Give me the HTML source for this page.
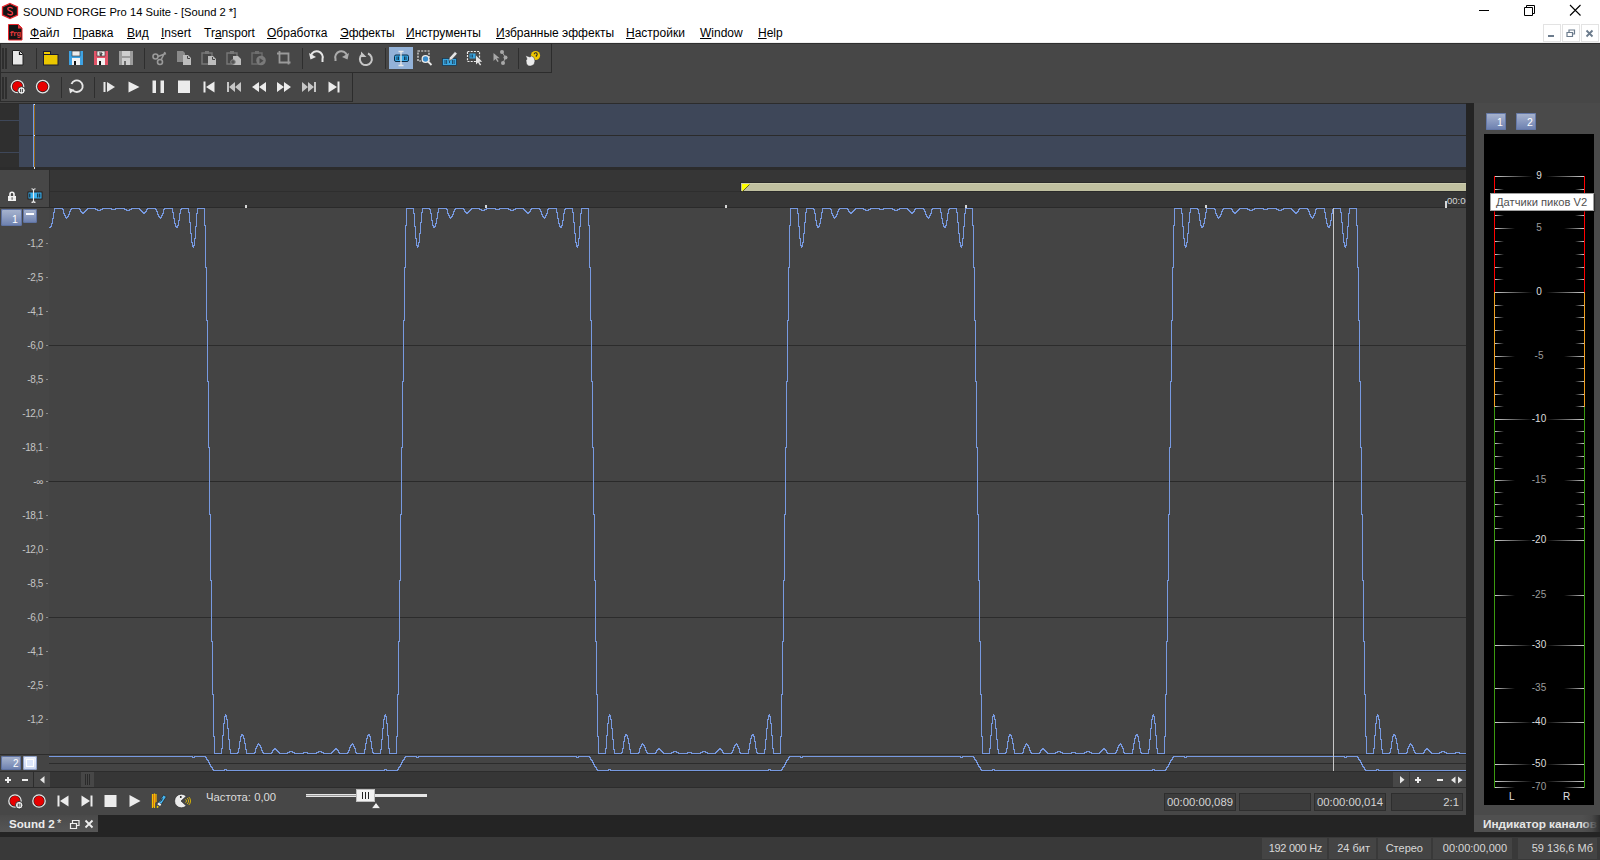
<!DOCTYPE html>
<html><head><meta charset="utf-8">
<style>
*{margin:0;padding:0;box-sizing:border-box}
html,body{width:1600px;height:860px;overflow:hidden;background:#474747;font-family:"Liberation Sans",sans-serif;font-size:12px}
.a{position:absolute}
.t{position:absolute;white-space:pre;line-height:1}
.mi{position:absolute;top:27px;color:#000;font-size:12px;white-space:pre;line-height:1}
.mi u{text-decoration:underline;text-decoration-thickness:1px;text-underline-offset:1px}
.tb{position:absolute;border:1px solid #2c2c2c}
.sep{position:absolute;width:1px;background:#2f2f2f}
.db{position:absolute;left:0;width:43px;text-align:right;font-size:10px;letter-spacing:-0.4px;color:#c4c4c4;line-height:1;white-space:pre}
.dbt{position:absolute;left:46px;width:2px;height:1px;background:#8a8a8a}
.cb{position:absolute;border-radius:2px;background:linear-gradient(#aab6cf,#8c9cc0 50%,#6a7eae);box-shadow:inset 0 0 0 1px #5f73a3}
.mt{position:absolute;font-size:10px;color:#d8d8d8;line-height:1;white-space:pre;text-align:center;width:30px}
.fld{position:absolute;top:793px;height:18px;background:#3c3c3c;border:1px solid #2e2e2e;color:#d4d4d4;font-size:11.3px;line-height:16px;white-space:pre}
.st{position:absolute;top:838px;height:21px;background:#444;color:#d8d8d8;font-size:11px;line-height:20px;white-space:pre;text-align:right}
</style></head><body>
<!-- ============ TITLE BAR ============ -->
<div class="a" style="left:0;top:0;width:1600px;height:43px;background:#fff"></div>
<div class="a" style="left:0;top:42px;width:1600px;height:1px;background:#efefef"></div>
<div class="a" style="left:0;top:43px;width:1600px;height:1px;background:#2f2f2f"></div>
<svg class="a" style="left:1px;top:2px" width="18" height="18" viewBox="0 0 18 18">
<polygon points="9,1.5 16.5,5 16.5,13 9,16.5 1.5,13 1.5,5" fill="#141414" stroke="#e8262c" stroke-width="1.3"/>
<path d="M11.6 6.6c-.5-.8-1.4-1.2-2.5-1.2-1.3 0-2.3.7-2.3 1.7 0 2.2 4.8 1.3 4.8 3.8 0 1.1-1 1.9-2.5 1.9-1.1 0-2-.4-2.6-1.2" fill="none" stroke="#f03a40" stroke-width="1.4"/>
</svg>
<div class="t" style="left:23px;top:7px;font-size:11.2px;color:#000">SOUND FORGE Pro 14 Suite - [Sound 2 *]</div>
<div class="a" style="left:1479px;top:10px;width:10px;height:1px;background:#000"></div>
<svg class="a" style="left:1523px;top:4px" width="13" height="13"><path d="M1.5 3.5h8v8h-8z M3.5 3.5v-2h8v8h-2" fill="none" stroke="#000" stroke-width="1"/></svg>
<svg class="a" style="left:1569px;top:4px" width="13" height="13"><path d="M1 1L11.5 11.5M11.5 1L1 11.5" stroke="#000" stroke-width="1.1"/></svg>

<!-- ============ MENU BAR ============ -->
<svg class="a" style="left:8px;top:24px" width="15" height="17" viewBox="0 0 15 17">
<path d="M0.5 0.5h10l3.5 3.5v12h-13.5z" fill="#141414" stroke="#e8262c" stroke-width="1"/>
<path d="M10 0.5l4 4h-4z" fill="#e8363c"/>
<text x="1.5" y="12" font-family="Liberation Mono" font-weight="bold" font-size="7.4" fill="#e8383c" letter-spacing="-0.9">frg</text>
</svg>
<div class="mi" style="left:30px"><u>Ф</u>айл</div>
<div class="mi" style="left:73px"><u>П</u>равка</div>
<div class="mi" style="left:127px"><u>В</u>ид</div>
<div class="mi" style="left:161px"><u>I</u>nsert</div>
<div class="mi" style="left:204px">Tr<u>a</u>nsport</div>
<div class="mi" style="left:267px"><u>О</u>бработка</div>
<div class="mi" style="left:340px"><u>Э</u>ффекты</div>
<div class="mi" style="left:406px"><u>И</u>нструменты</div>
<div class="mi" style="left:496px"><u>И</u>збранные эффекты</div>
<div class="mi" style="left:626px"><u>Н</u>астройки</div>
<div class="mi" style="left:700px"><u>W</u>indow</div>
<div class="mi" style="left:758px"><u>H</u>elp</div>
<div class="a" style="left:1543px;top:24px;width:18px;height:18px;border:1px solid #e3e3e3"></div>
<div class="a" style="left:1562px;top:24px;width:18px;height:18px;border:1px solid #e3e3e3"></div>
<div class="a" style="left:1581px;top:24px;width:18px;height:18px;border:1px solid #e3e3e3"></div>
<div class="a" style="left:1548px;top:35px;width:6px;height:2px;background:#6b7b8c"></div>
<svg class="a" style="left:1566px;top:28px" width="10" height="10"><path d="M1 4.5h5.5v4h-5.5z M3 4.5v-2.5h5.5v4h-2" fill="none" stroke="#6b7b8c" stroke-width="1.2"/></svg>
<svg class="a" style="left:1585px;top:29px" width="10" height="10"><path d="M1.5 1.5L7.5 7.5M7.5 1.5L1.5 7.5" stroke="#6b7b8c" stroke-width="1.8"/></svg>

<!-- ============ TOOLBARS ============ -->
<div class="tb" style="left:0;top:43px;width:552px;height:30px"></div>
<div class="tb" style="left:0;top:72px;width:353px;height:30px"></div>
<svg class="a" style="left:0;top:0" width="560" height="102" viewBox="0 0 560 102">
<!-- grips -->
<rect x="2" y="48" width="2" height="21" fill="#2e2e2e"/><rect x="5" y="48" width="2" height="21" fill="#2e2e2e"/>
<rect x="2" y="77" width="2" height="22" fill="#2e2e2e"/><rect x="5" y="77" width="2" height="22" fill="#2e2e2e"/>
<!-- separators tb1 -->
<rect x="36" y="48" width="1" height="21" fill="#2e2e2e"/>
<rect x="144" y="48" width="1" height="21" fill="#2e2e2e"/>
<rect x="302" y="48" width="1" height="21" fill="#2e2e2e"/>
<rect x="385" y="48" width="1" height="21" fill="#2e2e2e"/>
<rect x="518" y="48" width="1" height="21" fill="#2e2e2e"/>
<!-- new -->
<path d="M12.5 50.5h7l3.5 3.5v11h-10.5z" fill="#e9e9e9" stroke="#222" stroke-width="1"/>
<path d="M19.5 51.5v3h3" fill="none" stroke="#111" stroke-width="1.2"/>
<!-- open -->
<rect x="43.5" y="51.5" width="7" height="3" fill="#f0cc00" stroke="#1c1c30" stroke-width="1"/>
<rect x="43.5" y="54.5" width="14.5" height="10.5" fill="#ebc700" stroke="#1c1c30" stroke-width="1"/>
<!-- save blue -->
<rect x="69" y="51" width="14" height="14" fill="#3ea2e2"/>
<rect x="72" y="51" width="8" height="5" fill="#ececec" stroke="#2a2a2a" stroke-width="0.6"/>
<rect x="72" y="58" width="8" height="7" fill="#f2f2f2"/><rect x="74" y="61" width="2" height="4" fill="#151515"/>
<!-- save as red -->
<rect x="94" y="51" width="14" height="14" fill="#e25468"/>
<rect x="97" y="51" width="8" height="5" fill="#ececec" stroke="#2a2a2a" stroke-width="0.6"/>
<path d="M99 53h3v1.2h-2v1h2" fill="none" stroke="#222" stroke-width="0.9"/>
<rect x="97" y="58" width="8" height="7" fill="#f2f2f2"/><rect x="99" y="61" width="2" height="4" fill="#151515"/>
<!-- save gray -->
<rect x="119" y="51" width="14" height="14" fill="#9c9c9c"/>
<rect x="122" y="51" width="8" height="5" fill="#cfcfcf"/>
<rect x="122" y="58" width="8" height="7" fill="#cfcfcf"/><rect x="124" y="61" width="2" height="4" fill="#6a6a6a"/>
<!-- scissors -->
<g fill="none" stroke="#9a9a9a" stroke-width="1.6"><circle cx="155.5" cy="56.5" r="2.5"/><circle cx="160" cy="62" r="2.5"/><path d="M158 56.5l8-3M161 60l4-8"/></g>
<!-- copy -->
<path d="M177 51h6l2 2v9h-8z" fill="#8a8a8a"/><path d="M183 55h5l3 3v7h-8z" fill="#bdbdbd"/><path d="M187.5 56v2.5h2.5" fill="none" stroke="#444" stroke-width="1"/>
<!-- paste -->
<path d="M202 53h10v11h-10z" fill="none" stroke="#777" stroke-width="1.4"/><rect x="205" y="51" width="4" height="3" fill="#777"/><path d="M208 56h5l3 3v6h-8z" fill="#bdbdbd"/><path d="M212.5 57v2.5h2.5" fill="none" stroke="#444" stroke-width="1"/>
<!-- paste mix -->
<path d="M227 53h10v11h-10z" fill="none" stroke="#777" stroke-width="1.4"/><rect x="230" y="51" width="4" height="3" fill="#777"/><path d="M233 56h5l3 3v6h-8z" fill="#bdbdbd"/><circle cx="233" cy="62" r="2.3" fill="#555" stroke="#888" stroke-width="1"/>
<!-- paste play -->
<path d="M252 53h10v11h-10z" fill="none" stroke="#6e6e6e" stroke-width="1.4"/><rect x="255" y="51" width="4" height="3" fill="#6e6e6e"/><circle cx="261" cy="60.5" r="4.8" fill="#7a7a7a"/><path d="M259.5 58v5.5l4-2.75z" fill="#4a4a4a"/>
<!-- crop -->
<path d="M279.5 51v11.5h11M277 53.5h11.5v11" fill="none" stroke="#9a9a9a" stroke-width="1.8"/>
<!-- undo -->
<path d="M311 55.5a6 6 0 0 1 11.5 3.5v3" fill="none" stroke="#e6e6e6" stroke-width="2"/><path d="M309 53l1.5 6.5 5.5-2.5z" fill="#e6e6e6"/>
<!-- redo -->
<path d="M347 55.5a6 6 0 0 0 -11.5 3.5v2" fill="none" stroke="#ababab" stroke-width="2"/><path d="M349 53l-1.5 6.5 -5.5-2.5z" fill="#ababab"/>
<!-- repeat -->
<path d="M362 54.5a6 6 0 1 0 6 -1" fill="none" stroke="#c6c6c6" stroke-width="2"/><path d="M361 51.5v5.5h5.5z" fill="#c6c6c6"/>
<!-- selected edit tool -->
<rect x="389" y="47" width="24" height="22" fill="#93b2d8"/>
<rect x="394.5" y="55" width="14" height="6.5" rx="1.5" fill="#39a8e6" stroke="#0f2c44" stroke-width="1"/>
<path d="M397 56.5v3.5M398.5 56.5v3.5M404.5 56.5v3.5M406 56.5v3.5" stroke="#0f2c44" stroke-width="0.9"/>
<path d="M398.5 51.5h5M401 51.5v14M398.5 65.5h5" stroke="#e8e8e8" stroke-width="1.3"/>
<!-- magnify tool -->
<rect x="418" y="51" width="11" height="10" fill="none" stroke="#ececec" stroke-width="1.2" stroke-dasharray="2 1.2"/>
<circle cx="425.5" cy="59" r="3.3" fill="#3a8ecf" stroke="#ececec" stroke-width="1.3"/><path d="M428 61.5l3.5 3.5" stroke="#ececec" stroke-width="1.8"/>
<!-- pencil tool -->
<rect x="442.5" y="58.5" width="14" height="7" fill="#3aa6e0" stroke="#1a3850" stroke-width="0.8"/><path d="M445 60v4M446.6 60v4M452.5 60v4M454.1 60v4M449.5 61v2" stroke="#1a3850" stroke-width="0.8"/>
<path d="M449.5 57.5l5.5-6 2.3 2.2-5.5 6-3 .8z" fill="#e4e4e4" stroke="#2a2a2a" stroke-width="0.5"/>
<!-- event tool -->
<rect x="467.5" y="51.5" width="12" height="10" fill="none" stroke="#eee" stroke-width="1.2" stroke-dasharray="2 1.2"/>
<rect x="469.5" y="53.5" width="6" height="5" fill="#3aa6e0"/><path d="M471 54.5v3M472.5 54.5v3" stroke="#1a3850" stroke-width="0.8"/>
<path d="M476 55.5v9l2-2 2 3 1.2-.8-2-3h3z" fill="#e6e6e6"/>
<!-- envelope tool -->
<path d="M493.5 53v8l2-2 2 3 1.2-.8-2-3h3z" fill="#a8a8a8"/><circle cx="502" cy="52" r="2" fill="#a8a8a8"/><circle cx="505.5" cy="57.5" r="2" fill="#a8a8a8"/><circle cx="503" cy="63" r="2" fill="#a8a8a8"/><path d="M502 52l3.5 5.5-2.5 5.5" fill="none" stroke="#a8a8a8" stroke-width="1"/>
<!-- help -->
<circle cx="535.5" cy="55.5" r="4.6" fill="#f0c800"/><path d="M534.2 54.3a1.5 1.5 0 1 1 2.1 1.3v1.2" fill="none" stroke="#2a2a2a" stroke-width="1.1"/>
<path d="M525.5 55.5l4.5 1.5 1.5-1 2.5 1.5 1 3.5-1 3.5-3 1.5h-2.5l-2-2-.5-3.5 1-1.5z" fill="#ececec" stroke="#333" stroke-width="0.5"/>
<!-- ===== toolbar 2 ===== -->
<rect x="61" y="77" width="1" height="21" fill="#2e2e2e"/>
<rect x="94" y="77" width="1" height="21" fill="#2e2e2e"/>
<!-- rec pause -->
<circle cx="17.5" cy="86.5" r="6.2" fill="#222" stroke="#e6e6e6" stroke-width="1.3"/><circle cx="17.5" cy="86.5" r="4.9" fill="#e80000"/><circle cx="21.5" cy="90.5" r="3.8" fill="#f0f0f0" stroke="#2a2a2a" stroke-width="0.9"/><path d="M20.6 88.9v3.2M22.4 88.9v3.2" stroke="#2a2a2a" stroke-width="0.9"/>
<!-- rec -->
<circle cx="42.7" cy="86.6" r="6.2" fill="#222" stroke="#e6e6e6" stroke-width="1.3"/><circle cx="42.7" cy="86.6" r="4.9" fill="#e80000"/>
<!-- loop -->
<path d="M71.5 84a5.8 5.8 0 1 1 1 6" fill="none" stroke="#e6e6e6" stroke-width="1.9"/><path d="M69 88l1 5.5 4.5-3.5z" fill="#e6e6e6"/>
<!-- play from start -->
<rect x="103.5" y="82" width="2" height="10" fill="#e8e8e8"/><path d="M107 82v10l8-5z" fill="#e8e8e8"/>
<!-- play -->
<path d="M128.5 81.5v11l11-5.5z" fill="#ececec"/>
<!-- pause -->
<rect x="152.5" y="80.5" width="3.5" height="12.5" fill="#ececec"/><rect x="160.5" y="80.5" width="3.5" height="12.5" fill="#ececec"/>
<!-- stop -->
<rect x="178" y="80.5" width="12" height="12.5" fill="#ececec"/>
<!-- prev -->
<rect x="203.5" y="81.5" width="2" height="11" fill="#ececec"/><path d="M214.5 81.5v11l-8.5-5.5z" fill="#ececec"/>
<!-- rewind to start (dim) -->
<rect x="227" y="82" width="2" height="10" fill="#c6c6c6"/><path d="M235 82v10l-6-5zM241 82v10l-6-5z" fill="#c6c6c6"/>
<!-- rewind -->
<path d="M259 82v10l-7-5zM266 82v10l-7-5z" fill="#ececec"/>
<!-- ff -->
<path d="M277 82v10l7-5zM284 82v10l7-5z" fill="#ececec"/>
<!-- ff end dim -->
<path d="M302 82v10l6-5zM308 82v10l6-5z" fill="#c6c6c6"/><rect x="314" y="82" width="2" height="10" fill="#c6c6c6"/>
<!-- next -->
<path d="M328.5 81.5v11l8.5-5.5z" fill="#ececec"/><rect x="337.5" y="81.5" width="2" height="11" fill="#ececec"/>
</svg>


<!-- ============ DOC WINDOW ============ -->
<div class="a" style="left:0;top:103px;width:1466px;height:1px;background:#2c2c2c"></div>
<!-- overview -->
<div class="a" style="left:0;top:104px;width:19px;height:63px;background:#2f2f2f"></div>
<div class="a" style="left:0;top:120px;width:19px;height:1px;background:#3e4759"></div>
<div class="a" style="left:0;top:152px;width:19px;height:1px;background:#3e4759"></div>
<div class="a" style="left:19px;top:104px;width:1447px;height:63px;background:#3e4759"></div>
<div class="a" style="left:19px;top:135px;width:1447px;height:1px;background:#2b2b2b"></div>
<div class="a" style="left:33px;top:104px;width:1px;height:63px;background:#6f9be8"></div>
<div class="a" style="left:34px;top:104px;width:1px;height:63px;background:#9a6a18"></div>
<div class="a" style="left:34px;top:104px;width:1px;height:1px;background:#e8e8e8"></div>
<div class="a" style="left:34px;top:135px;width:1px;height:1px;background:#e8e8e8"></div>
<div class="a" style="left:0;top:167px;width:1466px;height:3px;background:#2c2c2c"></div>
<div class="a" style="left:34px;top:167px;width:1px;height:2px;background:#e0e0e0"></div>
<!-- ruler -->
<div class="a" style="left:0;top:170px;width:49px;height:37px;background:#474747"></div>
<div class="a" style="left:49px;top:170px;width:1px;height:37px;background:#2c2c2c"></div>
<div class="a" style="left:50px;top:170px;width:1416px;height:37px;background:#363636"></div>
<div class="a" style="left:50px;top:191px;width:1416px;height:1px;background:#2e2e2e"></div>
<div class="a" style="left:0;top:207px;width:1466px;height:1px;background:#2a2a2a"></div>
<div class="a" style="left:740px;top:182px;width:726px;height:10px;background:#2a2a2a"></div>
<div class="a" style="left:741px;top:183px;width:725px;height:8px;background:#c0c0a0;border-top:1px solid #cdcdb0"></div>
<svg class="a" style="left:741px;top:183px" width="10" height="9"><polygon points="1,1 9,1 1,8" fill="#ffff00"/><path d="M8.5 1.5L1.5 8.5" stroke="#6a6a10" stroke-width="1"/></svg>
<div class="a" style="left:245px;top:205px;width:2px;height:3px;background:#d6d6d6"></div>
<div class="a" style="left:485px;top:205px;width:2px;height:3px;background:#d6d6d6"></div>
<div class="a" style="left:725px;top:205px;width:2px;height:3px;background:#d6d6d6"></div>
<div class="a" style="left:965px;top:205px;width:2px;height:3px;background:#d6d6d6"></div>
<div class="a" style="left:1205px;top:205px;width:2px;height:3px;background:#d6d6d6"></div>
<div class="a" style="left:1445px;top:201px;width:2px;height:7px;background:#d6d6d6"></div>
<div class="t" style="left:1447px;top:196px;font-size:9.5px;color:#d6d6d6;width:19px;overflow:hidden">00:00</div>
<!-- lock + cursor icons -->
<svg class="a" style="left:7px;top:191px" width="10" height="11"><path d="M3 5V3.3a2 2 0 0 1 4 0V5" fill="none" stroke="#f2f2f2" stroke-width="1.6"/><rect x="1" y="5" width="8" height="5" fill="#f2f2f2"/><rect x="4.5" y="6.5" width="1.2" height="2" fill="#222"/><path d="M1 7.5h8" stroke="#d8d8d8" stroke-width="0.4"/></svg>
<svg class="a" style="left:27px;top:187px" width="16" height="17"><rect x="1" y="5" width="14" height="7" fill="#3ab0ee" stroke="#241a14" stroke-width="0.9"/><path d="M2.8 6.5v4M10.8 6.5v4M12.8 6.5v4" stroke="#111" stroke-width="1"/><path d="M4.5 1.8q2 0 2 2v9.6q0 2-2 2M8.5 1.8q-2 0-2 2v9.6q0 2 2 2" fill="none" stroke="#eaeaea" stroke-width="1.1"/></svg>

<!-- channel 1 -->
<div class="a" style="left:0;top:208px;width:1466px;height:547px;background:#444"></div>
<div class="a" style="left:0;top:208px;width:49px;height:547px;background:#464646"></div>
<div class="a" style="left:49px;top:345px;width:1417px;height:1px;background:#2c2c2c"></div>
<div class="a" style="left:49px;top:481px;width:1417px;height:1px;background:#2a2a2a"></div>
<div class="a" style="left:49px;top:617px;width:1417px;height:1px;background:#2c2c2c"></div>
<div class="db" style="top:239px">-1,2</div><div class="dbt" style="top:243px"></div>
<div class="db" style="top:273px">-2,5</div><div class="dbt" style="top:277px"></div>
<div class="db" style="top:307px">-4,1</div><div class="dbt" style="top:311px"></div>
<div class="db" style="top:341px">-6,0</div><div class="dbt" style="top:345px"></div>
<div class="db" style="top:375px">-8,5</div><div class="dbt" style="top:379px"></div>
<div class="db" style="top:409px">-12,0</div><div class="dbt" style="top:413px"></div>
<div class="db" style="top:443px">-18,1</div><div class="dbt" style="top:447px"></div>
<div class="db" style="top:477px">-∞</div><div class="dbt" style="top:481px"></div>
<div class="db" style="top:511px">-18,1</div><div class="dbt" style="top:515px"></div>
<div class="db" style="top:545px">-12,0</div><div class="dbt" style="top:549px"></div>
<div class="db" style="top:579px">-8,5</div><div class="dbt" style="top:583px"></div>
<div class="db" style="top:613px">-6,0</div><div class="dbt" style="top:617px"></div>
<div class="db" style="top:647px">-4,1</div><div class="dbt" style="top:651px"></div>
<div class="db" style="top:681px">-2,5</div><div class="dbt" style="top:685px"></div>
<div class="db" style="top:715px">-1,2</div><div class="dbt" style="top:719px"></div>
<div class="cb" style="left:1px;top:209px;width:21px;height:17px"></div>
<div class="t" style="left:12px;top:214px;font-size:10.5px;color:#fff">1</div>
<div class="cb" style="left:23px;top:209px;width:14px;height:14px"></div>
<div class="a" style="left:26px;top:213px;width:8px;height:2px;background:#fff"></div>
<!-- channel 2 -->
<div class="a" style="left:0;top:754px;width:1466px;height:1px;background:#2c2c2c"></div>
<div class="a" style="left:0;top:755px;width:1466px;height:16px;background:#444"></div>
<div class="a" style="left:49px;top:763px;width:1417px;height:1px;background:#2c2c2c"></div>
<div class="cb" style="left:1px;top:756px;width:20px;height:14px"></div>
<div class="t" style="left:13px;top:759px;font-size:10px;color:#fff">2</div>
<div class="a" style="left:23px;top:756px;width:14px;height:14px;border-radius:2px;background:linear-gradient(#f0f4ff,#c8d4f0);box-shadow:inset 0 0 0 1px #8ea0c8"></div>
<div class="a" style="left:26px;top:759px;width:8px;height:8px;border:1px solid #fff;background:#dce6fb"></div>
<div class="a" style="left:0;top:771px;width:1466px;height:1px;background:#2c2c2c"></div>
<!-- waveform -->
<svg class="a" style="left:0;top:0" width="1600" height="860" shape-rendering="crispEdges">
<path fill="#7799e0" d="M49 227h1v1h-1zM50 226h1v2h-1zM51 223h1v4h-1zM52 218h1v6h-1zM53 212h1v7h-1zM54 208h1v5h-1zM55 208h1v1h-1zM56 208h1v1h-1zM57 208h1v1h-1zM58 208h1v1h-1zM59 208h1v1h-1zM60 208h1v1h-1zM61 208h1v1h-1zM62 208h1v2h-1zM63 209h1v5h-1zM64 213h1v3h-1zM65 215h1v3h-1zM66 217h1v2h-1zM67 216h1v2h-1zM68 214h1v3h-1zM69 211h1v4h-1zM70 209h1v3h-1zM71 208h1v2h-1zM72 208h1v1h-1zM73 208h1v1h-1zM74 208h1v1h-1zM75 208h1v1h-1zM76 208h1v1h-1zM77 208h1v1h-1zM78 208h1v1h-1zM79 208h1v2h-1zM80 209h1v3h-1zM81 211h1v2h-1zM82 212h1v2h-1zM83 212h1v2h-1zM84 211h1v2h-1zM85 210h1v2h-1zM86 209h1v2h-1zM87 208h1v2h-1zM88 208h1v1h-1zM89 208h1v1h-1zM90 208h1v1h-1zM91 208h1v1h-1zM92 208h1v1h-1zM93 208h1v1h-1zM94 208h1v1h-1zM95 208h1v2h-1zM96 209h1v1h-1zM97 209h1v2h-1zM98 210h1v1h-1zM99 210h1v1h-1zM100 209h1v2h-1zM101 209h1v1h-1zM102 208h1v2h-1zM103 208h1v1h-1zM104 208h1v1h-1zM105 208h1v1h-1zM106 208h1v1h-1zM107 208h1v1h-1zM108 208h1v1h-1zM109 208h1v1h-1zM110 208h1v1h-1zM111 208h1v2h-1zM112 209h1v1h-1zM113 209h1v1h-1zM114 209h1v1h-1zM115 208h1v2h-1zM116 208h1v1h-1zM117 208h1v1h-1zM118 208h1v1h-1zM119 208h1v1h-1zM120 208h1v1h-1zM121 208h1v1h-1zM122 208h1v1h-1zM123 208h1v1h-1zM124 208h1v2h-1zM125 209h1v1h-1zM126 209h1v2h-1zM127 210h1v1h-1zM128 210h1v1h-1zM129 209h1v2h-1zM130 209h1v1h-1zM131 208h1v2h-1zM132 208h1v1h-1zM133 208h1v1h-1zM134 208h1v1h-1zM135 208h1v1h-1zM136 208h1v1h-1zM137 208h1v1h-1zM138 208h1v1h-1zM139 208h1v2h-1zM140 209h1v2h-1zM141 210h1v2h-1zM142 211h1v2h-1zM143 212h1v2h-1zM144 212h1v2h-1zM145 211h1v2h-1zM146 209h1v3h-1zM147 208h1v2h-1zM148 208h1v1h-1zM149 208h1v1h-1zM150 208h1v1h-1zM151 208h1v1h-1zM152 208h1v1h-1zM153 208h1v1h-1zM154 208h1v1h-1zM155 208h1v2h-1zM156 209h1v3h-1zM157 211h1v4h-1zM158 214h1v3h-1zM159 216h1v2h-1zM160 217h1v2h-1zM161 215h1v3h-1zM162 213h1v3h-1zM163 209h1v5h-1zM164 208h1v2h-1zM165 208h1v1h-1zM166 208h1v1h-1zM167 208h1v1h-1zM168 208h1v1h-1zM169 208h1v1h-1zM170 208h1v1h-1zM171 208h1v1h-1zM172 208h1v5h-1zM173 212h1v7h-1zM174 218h1v6h-1zM175 223h1v4h-1zM176 226h1v2h-1zM177 225h1v3h-1zM178 220h1v6h-1zM179 213h1v8h-1zM180 209h1v5h-1zM181 208h1v2h-1zM182 208h1v1h-1zM183 208h1v1h-1zM184 208h1v1h-1zM185 208h1v1h-1zM186 208h1v1h-1zM187 208h1v1h-1zM188 208h1v5h-1zM189 212h1v11h-1zM190 222h1v12h-1zM191 233h1v10h-1zM192 242h1v5h-1zM193 245h1v3h-1zM194 238h1v8h-1zM195 226h1v13h-1zM196 213h1v14h-1zM197 208h1v6h-1zM198 208h1v1h-1zM199 208h1v1h-1zM200 208h1v1h-1zM201 208h1v1h-1zM202 208h1v1h-1zM203 208h1v1h-1zM204 208h1v18h-1zM205 225h1v43h-1zM206 267h1v54h-1zM207 320h1v62h-1zM208 381h1v67h-1zM209 447h1v68h-1zM210 514h1v67h-1zM211 580h1v62h-1zM212 641h1v54h-1zM213 694h1v43h-1zM214 736h1v18h-1zM215 753h1v1h-1zM216 753h1v1h-1zM217 753h1v1h-1zM218 753h1v1h-1zM219 753h1v1h-1zM220 753h1v1h-1zM221 748h1v6h-1zM222 735h1v14h-1zM223 723h1v13h-1zM224 716h1v8h-1zM225 714h1v3h-1zM226 715h1v5h-1zM227 719h1v10h-1zM228 728h1v12h-1zM229 739h1v11h-1zM230 749h1v5h-1zM231 753h1v1h-1zM232 753h1v1h-1zM233 753h1v1h-1zM234 753h1v1h-1zM235 753h1v1h-1zM236 753h1v1h-1zM237 752h1v2h-1zM238 748h1v5h-1zM239 741h1v8h-1zM240 736h1v6h-1zM241 734h1v3h-1zM242 734h1v2h-1zM243 735h1v4h-1zM244 738h1v6h-1zM245 743h1v7h-1zM246 749h1v5h-1zM247 753h1v1h-1zM248 753h1v1h-1zM249 753h1v1h-1zM250 753h1v1h-1zM251 753h1v1h-1zM252 753h1v1h-1zM253 753h1v1h-1zM254 752h1v2h-1zM255 748h1v5h-1zM256 746h1v3h-1zM257 744h1v3h-1zM258 743h1v2h-1zM259 744h1v2h-1zM260 745h1v3h-1zM261 747h1v4h-1zM262 750h1v3h-1zM263 752h1v2h-1zM264 753h1v1h-1zM265 753h1v1h-1zM266 753h1v1h-1zM267 753h1v1h-1zM268 753h1v1h-1zM269 753h1v1h-1zM270 753h1v1h-1zM271 752h1v2h-1zM272 750h1v3h-1zM273 749h1v2h-1zM274 748h1v2h-1zM275 748h1v2h-1zM276 749h1v2h-1zM277 750h1v2h-1zM278 751h1v2h-1zM279 752h1v2h-1zM280 753h1v1h-1zM281 753h1v1h-1zM282 753h1v1h-1zM283 753h1v1h-1zM284 753h1v1h-1zM285 753h1v1h-1zM286 753h1v1h-1zM287 752h1v2h-1zM288 752h1v1h-1zM289 751h1v2h-1zM290 751h1v1h-1zM291 751h1v1h-1zM292 751h1v2h-1zM293 752h1v1h-1zM294 752h1v2h-1zM295 753h1v1h-1zM296 753h1v1h-1zM297 753h1v1h-1zM298 753h1v1h-1zM299 753h1v1h-1zM300 753h1v1h-1zM301 753h1v1h-1zM302 753h1v1h-1zM303 752h1v2h-1zM304 752h1v1h-1zM305 752h1v1h-1zM306 752h1v1h-1zM307 752h1v2h-1zM308 753h1v1h-1zM309 753h1v1h-1zM310 753h1v1h-1zM311 753h1v1h-1zM312 753h1v1h-1zM313 753h1v1h-1zM314 753h1v1h-1zM315 753h1v1h-1zM316 752h1v2h-1zM317 752h1v1h-1zM318 751h1v2h-1zM319 751h1v1h-1zM320 751h1v1h-1zM321 751h1v2h-1zM322 752h1v1h-1zM323 752h1v2h-1zM324 753h1v1h-1zM325 753h1v1h-1zM326 753h1v1h-1zM327 753h1v1h-1zM328 753h1v1h-1zM329 753h1v1h-1zM330 753h1v1h-1zM331 752h1v2h-1zM332 751h1v2h-1zM333 750h1v2h-1zM334 749h1v2h-1zM335 748h1v2h-1zM336 748h1v2h-1zM337 749h1v2h-1zM338 750h1v3h-1zM339 752h1v2h-1zM340 753h1v1h-1zM341 753h1v1h-1zM342 753h1v1h-1zM343 753h1v1h-1zM344 753h1v1h-1zM345 753h1v1h-1zM346 753h1v1h-1zM347 752h1v2h-1zM348 750h1v3h-1zM349 747h1v4h-1zM350 745h1v3h-1zM351 744h1v2h-1zM352 743h1v2h-1zM353 744h1v3h-1zM354 746h1v3h-1zM355 748h1v5h-1zM356 752h1v2h-1zM357 753h1v1h-1zM358 753h1v1h-1zM359 753h1v1h-1zM360 753h1v1h-1zM361 753h1v1h-1zM362 753h1v1h-1zM363 753h1v1h-1zM364 749h1v5h-1zM365 743h1v7h-1zM366 738h1v6h-1zM367 735h1v4h-1zM368 734h1v2h-1zM369 734h1v3h-1zM370 736h1v6h-1zM371 741h1v8h-1zM372 748h1v5h-1zM373 752h1v2h-1zM374 753h1v1h-1zM375 753h1v1h-1zM376 753h1v1h-1zM377 753h1v1h-1zM378 753h1v1h-1zM379 753h1v1h-1zM380 749h1v5h-1zM381 739h1v11h-1zM382 728h1v12h-1zM383 719h1v10h-1zM384 715h1v5h-1zM385 714h1v3h-1zM386 716h1v8h-1zM387 723h1v13h-1zM388 735h1v14h-1zM389 748h1v6h-1zM390 753h1v1h-1zM391 753h1v1h-1zM392 753h1v1h-1zM393 753h1v1h-1zM394 753h1v1h-1zM395 753h1v1h-1zM396 736h1v18h-1zM397 694h1v43h-1zM398 641h1v54h-1zM399 580h1v62h-1zM400 514h1v67h-1zM401 447h1v68h-1zM402 381h1v67h-1zM403 320h1v62h-1zM404 267h1v54h-1zM405 225h1v43h-1zM406 208h1v18h-1zM407 208h1v1h-1zM408 208h1v1h-1zM409 208h1v1h-1zM410 208h1v1h-1zM411 208h1v1h-1zM412 208h1v1h-1zM413 208h1v6h-1zM414 213h1v14h-1zM415 226h1v13h-1zM416 238h1v8h-1zM417 245h1v3h-1zM418 242h1v5h-1zM419 233h1v10h-1zM420 222h1v12h-1zM421 212h1v11h-1zM422 208h1v5h-1zM423 208h1v1h-1zM424 208h1v1h-1zM425 208h1v1h-1zM426 208h1v1h-1zM427 208h1v1h-1zM428 208h1v1h-1zM429 208h1v2h-1zM430 209h1v5h-1zM431 213h1v8h-1zM432 220h1v6h-1zM433 225h1v3h-1zM434 226h1v2h-1zM435 223h1v4h-1zM436 218h1v6h-1zM437 212h1v7h-1zM438 208h1v5h-1zM439 208h1v1h-1zM440 208h1v1h-1zM441 208h1v1h-1zM442 208h1v1h-1zM443 208h1v1h-1zM444 208h1v1h-1zM445 208h1v1h-1zM446 208h1v2h-1zM447 209h1v5h-1zM448 213h1v3h-1zM449 215h1v3h-1zM450 217h1v2h-1zM451 216h1v2h-1zM452 214h1v3h-1zM453 211h1v4h-1zM454 209h1v3h-1zM455 208h1v2h-1zM456 208h1v1h-1zM457 208h1v1h-1zM458 208h1v1h-1zM459 208h1v1h-1zM460 208h1v1h-1zM461 208h1v1h-1zM462 208h1v1h-1zM463 208h1v2h-1zM464 209h1v3h-1zM465 211h1v2h-1zM466 212h1v2h-1zM467 212h1v2h-1zM468 211h1v2h-1zM469 210h1v2h-1zM470 209h1v2h-1zM471 208h1v2h-1zM472 208h1v1h-1zM473 208h1v1h-1zM474 208h1v1h-1zM475 208h1v1h-1zM476 208h1v1h-1zM477 208h1v1h-1zM478 208h1v1h-1zM479 208h1v2h-1zM480 209h1v1h-1zM481 209h1v2h-1zM482 210h1v1h-1zM483 210h1v1h-1zM484 209h1v2h-1zM485 209h1v1h-1zM486 208h1v2h-1zM487 208h1v1h-1zM488 208h1v1h-1zM489 208h1v1h-1zM490 208h1v1h-1zM491 208h1v1h-1zM492 208h1v1h-1zM493 208h1v1h-1zM494 208h1v1h-1zM495 208h1v2h-1zM496 209h1v1h-1zM497 209h1v1h-1zM498 209h1v1h-1zM499 208h1v2h-1zM500 208h1v1h-1zM501 208h1v1h-1zM502 208h1v1h-1zM503 208h1v1h-1zM504 208h1v1h-1zM505 208h1v1h-1zM506 208h1v1h-1zM507 208h1v1h-1zM508 208h1v2h-1zM509 209h1v1h-1zM510 209h1v2h-1zM511 210h1v1h-1zM512 210h1v1h-1zM513 209h1v2h-1zM514 209h1v1h-1zM515 208h1v2h-1zM516 208h1v1h-1zM517 208h1v1h-1zM518 208h1v1h-1zM519 208h1v1h-1zM520 208h1v1h-1zM521 208h1v1h-1zM522 208h1v1h-1zM523 208h1v2h-1zM524 209h1v2h-1zM525 210h1v2h-1zM526 211h1v2h-1zM527 212h1v2h-1zM528 212h1v2h-1zM529 211h1v2h-1zM530 209h1v3h-1zM531 208h1v2h-1zM532 208h1v1h-1zM533 208h1v1h-1zM534 208h1v1h-1zM535 208h1v1h-1zM536 208h1v1h-1zM537 208h1v1h-1zM538 208h1v1h-1zM539 208h1v2h-1zM540 209h1v3h-1zM541 211h1v4h-1zM542 214h1v3h-1zM543 216h1v2h-1zM544 217h1v2h-1zM545 215h1v3h-1zM546 213h1v3h-1zM547 209h1v5h-1zM548 208h1v2h-1zM549 208h1v1h-1zM550 208h1v1h-1zM551 208h1v1h-1zM552 208h1v1h-1zM553 208h1v1h-1zM554 208h1v1h-1zM555 208h1v1h-1zM556 208h1v5h-1zM557 212h1v7h-1zM558 218h1v6h-1zM559 223h1v4h-1zM560 226h1v2h-1zM561 225h1v3h-1zM562 220h1v6h-1zM563 213h1v8h-1zM564 209h1v5h-1zM565 208h1v2h-1zM566 208h1v1h-1zM567 208h1v1h-1zM568 208h1v1h-1zM569 208h1v1h-1zM570 208h1v1h-1zM571 208h1v1h-1zM572 208h1v5h-1zM573 212h1v11h-1zM574 222h1v12h-1zM575 233h1v10h-1zM576 242h1v5h-1zM577 245h1v3h-1zM578 238h1v8h-1zM579 226h1v13h-1zM580 213h1v14h-1zM581 208h1v6h-1zM582 208h1v1h-1zM583 208h1v1h-1zM584 208h1v1h-1zM585 208h1v1h-1zM586 208h1v1h-1zM587 208h1v1h-1zM588 208h1v18h-1zM589 225h1v43h-1zM590 267h1v54h-1zM591 320h1v62h-1zM592 381h1v67h-1zM593 447h1v68h-1zM594 514h1v67h-1zM595 580h1v62h-1zM596 641h1v54h-1zM597 694h1v43h-1zM598 736h1v18h-1zM599 753h1v1h-1zM600 753h1v1h-1zM601 753h1v1h-1zM602 753h1v1h-1zM603 753h1v1h-1zM604 753h1v1h-1zM605 748h1v6h-1zM606 735h1v14h-1zM607 723h1v13h-1zM608 716h1v8h-1zM609 714h1v3h-1zM610 715h1v5h-1zM611 719h1v10h-1zM612 728h1v12h-1zM613 739h1v11h-1zM614 749h1v5h-1zM615 753h1v1h-1zM616 753h1v1h-1zM617 753h1v1h-1zM618 753h1v1h-1zM619 753h1v1h-1zM620 753h1v1h-1zM621 752h1v2h-1zM622 748h1v5h-1zM623 741h1v8h-1zM624 736h1v6h-1zM625 734h1v3h-1zM626 734h1v2h-1zM627 735h1v4h-1zM628 738h1v6h-1zM629 743h1v7h-1zM630 749h1v5h-1zM631 753h1v1h-1zM632 753h1v1h-1zM633 753h1v1h-1zM634 753h1v1h-1zM635 753h1v1h-1zM636 753h1v1h-1zM637 753h1v1h-1zM638 752h1v2h-1zM639 748h1v5h-1zM640 746h1v3h-1zM641 744h1v3h-1zM642 743h1v2h-1zM643 744h1v2h-1zM644 745h1v3h-1zM645 747h1v4h-1zM646 750h1v3h-1zM647 752h1v2h-1zM648 753h1v1h-1zM649 753h1v1h-1zM650 753h1v1h-1zM651 753h1v1h-1zM652 753h1v1h-1zM653 753h1v1h-1zM654 753h1v1h-1zM655 752h1v2h-1zM656 750h1v3h-1zM657 749h1v2h-1zM658 748h1v2h-1zM659 748h1v2h-1zM660 749h1v2h-1zM661 750h1v2h-1zM662 751h1v2h-1zM663 752h1v2h-1zM664 753h1v1h-1zM665 753h1v1h-1zM666 753h1v1h-1zM667 753h1v1h-1zM668 753h1v1h-1zM669 753h1v1h-1zM670 753h1v1h-1zM671 752h1v2h-1zM672 752h1v1h-1zM673 751h1v2h-1zM674 751h1v1h-1zM675 751h1v1h-1zM676 751h1v2h-1zM677 752h1v1h-1zM678 752h1v2h-1zM679 753h1v1h-1zM680 753h1v1h-1zM681 753h1v1h-1zM682 753h1v1h-1zM683 753h1v1h-1zM684 753h1v1h-1zM685 753h1v1h-1zM686 753h1v1h-1zM687 752h1v2h-1zM688 752h1v1h-1zM689 752h1v1h-1zM690 752h1v1h-1zM691 752h1v2h-1zM692 753h1v1h-1zM693 753h1v1h-1zM694 753h1v1h-1zM695 753h1v1h-1zM696 753h1v1h-1zM697 753h1v1h-1zM698 753h1v1h-1zM699 753h1v1h-1zM700 752h1v2h-1zM701 752h1v1h-1zM702 751h1v2h-1zM703 751h1v1h-1zM704 751h1v1h-1zM705 751h1v2h-1zM706 752h1v1h-1zM707 752h1v2h-1zM708 753h1v1h-1zM709 753h1v1h-1zM710 753h1v1h-1zM711 753h1v1h-1zM712 753h1v1h-1zM713 753h1v1h-1zM714 753h1v1h-1zM715 752h1v2h-1zM716 751h1v2h-1zM717 750h1v2h-1zM718 749h1v2h-1zM719 748h1v2h-1zM720 748h1v2h-1zM721 749h1v2h-1zM722 750h1v3h-1zM723 752h1v2h-1zM724 753h1v1h-1zM725 753h1v1h-1zM726 753h1v1h-1zM727 753h1v1h-1zM728 753h1v1h-1zM729 753h1v1h-1zM730 753h1v1h-1zM731 752h1v2h-1zM732 750h1v3h-1zM733 747h1v4h-1zM734 745h1v3h-1zM735 744h1v2h-1zM736 743h1v2h-1zM737 744h1v3h-1zM738 746h1v3h-1zM739 748h1v5h-1zM740 752h1v2h-1zM741 753h1v1h-1zM742 753h1v1h-1zM743 753h1v1h-1zM744 753h1v1h-1zM745 753h1v1h-1zM746 753h1v1h-1zM747 753h1v1h-1zM748 749h1v5h-1zM749 743h1v7h-1zM750 738h1v6h-1zM751 735h1v4h-1zM752 734h1v2h-1zM753 734h1v3h-1zM754 736h1v6h-1zM755 741h1v8h-1zM756 748h1v5h-1zM757 752h1v2h-1zM758 753h1v1h-1zM759 753h1v1h-1zM760 753h1v1h-1zM761 753h1v1h-1zM762 753h1v1h-1zM763 753h1v1h-1zM764 749h1v5h-1zM765 739h1v11h-1zM766 728h1v12h-1zM767 719h1v10h-1zM768 715h1v5h-1zM769 714h1v3h-1zM770 716h1v8h-1zM771 723h1v13h-1zM772 735h1v14h-1zM773 748h1v6h-1zM774 753h1v1h-1zM775 753h1v1h-1zM776 753h1v1h-1zM777 753h1v1h-1zM778 753h1v1h-1zM779 753h1v1h-1zM780 736h1v18h-1zM781 694h1v43h-1zM782 641h1v54h-1zM783 580h1v62h-1zM784 514h1v67h-1zM785 447h1v68h-1zM786 381h1v67h-1zM787 320h1v62h-1zM788 267h1v54h-1zM789 225h1v43h-1zM790 208h1v18h-1zM791 208h1v1h-1zM792 208h1v1h-1zM793 208h1v1h-1zM794 208h1v1h-1zM795 208h1v1h-1zM796 208h1v1h-1zM797 208h1v6h-1zM798 213h1v14h-1zM799 226h1v13h-1zM800 238h1v8h-1zM801 245h1v3h-1zM802 242h1v5h-1zM803 233h1v10h-1zM804 222h1v12h-1zM805 212h1v11h-1zM806 208h1v5h-1zM807 208h1v1h-1zM808 208h1v1h-1zM809 208h1v1h-1zM810 208h1v1h-1zM811 208h1v1h-1zM812 208h1v1h-1zM813 208h1v2h-1zM814 209h1v5h-1zM815 213h1v8h-1zM816 220h1v6h-1zM817 225h1v3h-1zM818 226h1v2h-1zM819 223h1v4h-1zM820 218h1v6h-1zM821 212h1v7h-1zM822 208h1v5h-1zM823 208h1v1h-1zM824 208h1v1h-1zM825 208h1v1h-1zM826 208h1v1h-1zM827 208h1v1h-1zM828 208h1v1h-1zM829 208h1v1h-1zM830 208h1v2h-1zM831 209h1v5h-1zM832 213h1v3h-1zM833 215h1v3h-1zM834 217h1v2h-1zM835 216h1v2h-1zM836 214h1v3h-1zM837 211h1v4h-1zM838 209h1v3h-1zM839 208h1v2h-1zM840 208h1v1h-1zM841 208h1v1h-1zM842 208h1v1h-1zM843 208h1v1h-1zM844 208h1v1h-1zM845 208h1v1h-1zM846 208h1v1h-1zM847 208h1v2h-1zM848 209h1v3h-1zM849 211h1v2h-1zM850 212h1v2h-1zM851 212h1v2h-1zM852 211h1v2h-1zM853 210h1v2h-1zM854 209h1v2h-1zM855 208h1v2h-1zM856 208h1v1h-1zM857 208h1v1h-1zM858 208h1v1h-1zM859 208h1v1h-1zM860 208h1v1h-1zM861 208h1v1h-1zM862 208h1v1h-1zM863 208h1v2h-1zM864 209h1v1h-1zM865 209h1v2h-1zM866 210h1v1h-1zM867 210h1v1h-1zM868 209h1v2h-1zM869 209h1v1h-1zM870 208h1v2h-1zM871 208h1v1h-1zM872 208h1v1h-1zM873 208h1v1h-1zM874 208h1v1h-1zM875 208h1v1h-1zM876 208h1v1h-1zM877 208h1v1h-1zM878 208h1v1h-1zM879 208h1v2h-1zM880 209h1v1h-1zM881 209h1v1h-1zM882 209h1v1h-1zM883 208h1v2h-1zM884 208h1v1h-1zM885 208h1v1h-1zM886 208h1v1h-1zM887 208h1v1h-1zM888 208h1v1h-1zM889 208h1v1h-1zM890 208h1v1h-1zM891 208h1v1h-1zM892 208h1v2h-1zM893 209h1v1h-1zM894 209h1v2h-1zM895 210h1v1h-1zM896 210h1v1h-1zM897 209h1v2h-1zM898 209h1v1h-1zM899 208h1v2h-1zM900 208h1v1h-1zM901 208h1v1h-1zM902 208h1v1h-1zM903 208h1v1h-1zM904 208h1v1h-1zM905 208h1v1h-1zM906 208h1v1h-1zM907 208h1v2h-1zM908 209h1v2h-1zM909 210h1v2h-1zM910 211h1v2h-1zM911 212h1v2h-1zM912 212h1v2h-1zM913 211h1v2h-1zM914 209h1v3h-1zM915 208h1v2h-1zM916 208h1v1h-1zM917 208h1v1h-1zM918 208h1v1h-1zM919 208h1v1h-1zM920 208h1v1h-1zM921 208h1v1h-1zM922 208h1v1h-1zM923 208h1v2h-1zM924 209h1v3h-1zM925 211h1v4h-1zM926 214h1v3h-1zM927 216h1v2h-1zM928 217h1v2h-1zM929 215h1v3h-1zM930 213h1v3h-1zM931 209h1v5h-1zM932 208h1v2h-1zM933 208h1v1h-1zM934 208h1v1h-1zM935 208h1v1h-1zM936 208h1v1h-1zM937 208h1v1h-1zM938 208h1v1h-1zM939 208h1v1h-1zM940 208h1v5h-1zM941 212h1v7h-1zM942 218h1v6h-1zM943 223h1v4h-1zM944 226h1v2h-1zM945 225h1v3h-1zM946 220h1v6h-1zM947 213h1v8h-1zM948 209h1v5h-1zM949 208h1v2h-1zM950 208h1v1h-1zM951 208h1v1h-1zM952 208h1v1h-1zM953 208h1v1h-1zM954 208h1v1h-1zM955 208h1v1h-1zM956 208h1v5h-1zM957 212h1v11h-1zM958 222h1v12h-1zM959 233h1v10h-1zM960 242h1v5h-1zM961 245h1v3h-1zM962 238h1v8h-1zM963 226h1v13h-1zM964 213h1v14h-1zM965 208h1v6h-1zM966 208h1v1h-1zM967 208h1v1h-1zM968 208h1v1h-1zM969 208h1v1h-1zM970 208h1v1h-1zM971 208h1v1h-1zM972 208h1v18h-1zM973 225h1v43h-1zM974 267h1v54h-1zM975 320h1v62h-1zM976 381h1v67h-1zM977 447h1v68h-1zM978 514h1v67h-1zM979 580h1v62h-1zM980 641h1v54h-1zM981 694h1v43h-1zM982 736h1v18h-1zM983 753h1v1h-1zM984 753h1v1h-1zM985 753h1v1h-1zM986 753h1v1h-1zM987 753h1v1h-1zM988 753h1v1h-1zM989 748h1v6h-1zM990 735h1v14h-1zM991 723h1v13h-1zM992 716h1v8h-1zM993 714h1v3h-1zM994 715h1v5h-1zM995 719h1v10h-1zM996 728h1v12h-1zM997 739h1v11h-1zM998 749h1v5h-1zM999 753h1v1h-1zM1000 753h1v1h-1zM1001 753h1v1h-1zM1002 753h1v1h-1zM1003 753h1v1h-1zM1004 753h1v1h-1zM1005 752h1v2h-1zM1006 748h1v5h-1zM1007 741h1v8h-1zM1008 736h1v6h-1zM1009 734h1v3h-1zM1010 734h1v2h-1zM1011 735h1v4h-1zM1012 738h1v6h-1zM1013 743h1v7h-1zM1014 749h1v5h-1zM1015 753h1v1h-1zM1016 753h1v1h-1zM1017 753h1v1h-1zM1018 753h1v1h-1zM1019 753h1v1h-1zM1020 753h1v1h-1zM1021 753h1v1h-1zM1022 752h1v2h-1zM1023 748h1v5h-1zM1024 746h1v3h-1zM1025 744h1v3h-1zM1026 743h1v2h-1zM1027 744h1v2h-1zM1028 745h1v3h-1zM1029 747h1v4h-1zM1030 750h1v3h-1zM1031 752h1v2h-1zM1032 753h1v1h-1zM1033 753h1v1h-1zM1034 753h1v1h-1zM1035 753h1v1h-1zM1036 753h1v1h-1zM1037 753h1v1h-1zM1038 753h1v1h-1zM1039 752h1v2h-1zM1040 750h1v3h-1zM1041 749h1v2h-1zM1042 748h1v2h-1zM1043 748h1v2h-1zM1044 749h1v2h-1zM1045 750h1v2h-1zM1046 751h1v2h-1zM1047 752h1v2h-1zM1048 753h1v1h-1zM1049 753h1v1h-1zM1050 753h1v1h-1zM1051 753h1v1h-1zM1052 753h1v1h-1zM1053 753h1v1h-1zM1054 753h1v1h-1zM1055 752h1v2h-1zM1056 752h1v1h-1zM1057 751h1v2h-1zM1058 751h1v1h-1zM1059 751h1v1h-1zM1060 751h1v2h-1zM1061 752h1v1h-1zM1062 752h1v2h-1zM1063 753h1v1h-1zM1064 753h1v1h-1zM1065 753h1v1h-1zM1066 753h1v1h-1zM1067 753h1v1h-1zM1068 753h1v1h-1zM1069 753h1v1h-1zM1070 753h1v1h-1zM1071 752h1v2h-1zM1072 752h1v1h-1zM1073 752h1v1h-1zM1074 752h1v1h-1zM1075 752h1v2h-1zM1076 753h1v1h-1zM1077 753h1v1h-1zM1078 753h1v1h-1zM1079 753h1v1h-1zM1080 753h1v1h-1zM1081 753h1v1h-1zM1082 753h1v1h-1zM1083 753h1v1h-1zM1084 752h1v2h-1zM1085 752h1v1h-1zM1086 751h1v2h-1zM1087 751h1v1h-1zM1088 751h1v1h-1zM1089 751h1v2h-1zM1090 752h1v1h-1zM1091 752h1v2h-1zM1092 753h1v1h-1zM1093 753h1v1h-1zM1094 753h1v1h-1zM1095 753h1v1h-1zM1096 753h1v1h-1zM1097 753h1v1h-1zM1098 753h1v1h-1zM1099 752h1v2h-1zM1100 751h1v2h-1zM1101 750h1v2h-1zM1102 749h1v2h-1zM1103 748h1v2h-1zM1104 748h1v2h-1zM1105 749h1v2h-1zM1106 750h1v3h-1zM1107 752h1v2h-1zM1108 753h1v1h-1zM1109 753h1v1h-1zM1110 753h1v1h-1zM1111 753h1v1h-1zM1112 753h1v1h-1zM1113 753h1v1h-1zM1114 753h1v1h-1zM1115 752h1v2h-1zM1116 750h1v3h-1zM1117 747h1v4h-1zM1118 745h1v3h-1zM1119 744h1v2h-1zM1120 743h1v2h-1zM1121 744h1v3h-1zM1122 746h1v3h-1zM1123 748h1v5h-1zM1124 752h1v2h-1zM1125 753h1v1h-1zM1126 753h1v1h-1zM1127 753h1v1h-1zM1128 753h1v1h-1zM1129 753h1v1h-1zM1130 753h1v1h-1zM1131 753h1v1h-1zM1132 749h1v5h-1zM1133 743h1v7h-1zM1134 738h1v6h-1zM1135 735h1v4h-1zM1136 734h1v2h-1zM1137 734h1v3h-1zM1138 736h1v6h-1zM1139 741h1v8h-1zM1140 748h1v5h-1zM1141 752h1v2h-1zM1142 753h1v1h-1zM1143 753h1v1h-1zM1144 753h1v1h-1zM1145 753h1v1h-1zM1146 753h1v1h-1zM1147 753h1v1h-1zM1148 749h1v5h-1zM1149 739h1v11h-1zM1150 728h1v12h-1zM1151 719h1v10h-1zM1152 715h1v5h-1zM1153 714h1v3h-1zM1154 716h1v8h-1zM1155 723h1v13h-1zM1156 735h1v14h-1zM1157 748h1v6h-1zM1158 753h1v1h-1zM1159 753h1v1h-1zM1160 753h1v1h-1zM1161 753h1v1h-1zM1162 753h1v1h-1zM1163 753h1v1h-1zM1164 736h1v18h-1zM1165 694h1v43h-1zM1166 641h1v54h-1zM1167 580h1v62h-1zM1168 514h1v67h-1zM1169 447h1v68h-1zM1170 381h1v67h-1zM1171 320h1v62h-1zM1172 267h1v54h-1zM1173 225h1v43h-1zM1174 208h1v18h-1zM1175 208h1v1h-1zM1176 208h1v1h-1zM1177 208h1v1h-1zM1178 208h1v1h-1zM1179 208h1v1h-1zM1180 208h1v1h-1zM1181 208h1v6h-1zM1182 213h1v14h-1zM1183 226h1v13h-1zM1184 238h1v8h-1zM1185 245h1v3h-1zM1186 242h1v5h-1zM1187 233h1v10h-1zM1188 222h1v12h-1zM1189 212h1v11h-1zM1190 208h1v5h-1zM1191 208h1v1h-1zM1192 208h1v1h-1zM1193 208h1v1h-1zM1194 208h1v1h-1zM1195 208h1v1h-1zM1196 208h1v1h-1zM1197 208h1v2h-1zM1198 209h1v5h-1zM1199 213h1v8h-1zM1200 220h1v6h-1zM1201 225h1v3h-1zM1202 226h1v2h-1zM1203 223h1v4h-1zM1204 218h1v6h-1zM1205 212h1v7h-1zM1206 208h1v5h-1zM1207 208h1v1h-1zM1208 208h1v1h-1zM1209 208h1v1h-1zM1210 208h1v1h-1zM1211 208h1v1h-1zM1212 208h1v1h-1zM1213 208h1v1h-1zM1214 208h1v2h-1zM1215 209h1v5h-1zM1216 213h1v3h-1zM1217 215h1v3h-1zM1218 217h1v2h-1zM1219 216h1v2h-1zM1220 214h1v3h-1zM1221 211h1v4h-1zM1222 209h1v3h-1zM1223 208h1v2h-1zM1224 208h1v1h-1zM1225 208h1v1h-1zM1226 208h1v1h-1zM1227 208h1v1h-1zM1228 208h1v1h-1zM1229 208h1v1h-1zM1230 208h1v1h-1zM1231 208h1v2h-1zM1232 209h1v3h-1zM1233 211h1v2h-1zM1234 212h1v2h-1zM1235 212h1v2h-1zM1236 211h1v2h-1zM1237 210h1v2h-1zM1238 209h1v2h-1zM1239 208h1v2h-1zM1240 208h1v1h-1zM1241 208h1v1h-1zM1242 208h1v1h-1zM1243 208h1v1h-1zM1244 208h1v1h-1zM1245 208h1v1h-1zM1246 208h1v1h-1zM1247 208h1v2h-1zM1248 209h1v1h-1zM1249 209h1v2h-1zM1250 210h1v1h-1zM1251 210h1v1h-1zM1252 209h1v2h-1zM1253 209h1v1h-1zM1254 208h1v2h-1zM1255 208h1v1h-1zM1256 208h1v1h-1zM1257 208h1v1h-1zM1258 208h1v1h-1zM1259 208h1v1h-1zM1260 208h1v1h-1zM1261 208h1v1h-1zM1262 208h1v1h-1zM1263 208h1v2h-1zM1264 209h1v1h-1zM1265 209h1v1h-1zM1266 209h1v1h-1zM1267 208h1v2h-1zM1268 208h1v1h-1zM1269 208h1v1h-1zM1270 208h1v1h-1zM1271 208h1v1h-1zM1272 208h1v1h-1zM1273 208h1v1h-1zM1274 208h1v1h-1zM1275 208h1v1h-1zM1276 208h1v2h-1zM1277 209h1v1h-1zM1278 209h1v2h-1zM1279 210h1v1h-1zM1280 210h1v1h-1zM1281 209h1v2h-1zM1282 209h1v1h-1zM1283 208h1v2h-1zM1284 208h1v1h-1zM1285 208h1v1h-1zM1286 208h1v1h-1zM1287 208h1v1h-1zM1288 208h1v1h-1zM1289 208h1v1h-1zM1290 208h1v1h-1zM1291 208h1v2h-1zM1292 209h1v2h-1zM1293 210h1v2h-1zM1294 211h1v2h-1zM1295 212h1v2h-1zM1296 212h1v2h-1zM1297 211h1v2h-1zM1298 209h1v3h-1zM1299 208h1v2h-1zM1300 208h1v1h-1zM1301 208h1v1h-1zM1302 208h1v1h-1zM1303 208h1v1h-1zM1304 208h1v1h-1zM1305 208h1v1h-1zM1306 208h1v1h-1zM1307 208h1v2h-1zM1308 209h1v3h-1zM1309 211h1v4h-1zM1310 214h1v3h-1zM1311 216h1v2h-1zM1312 217h1v2h-1zM1313 215h1v3h-1zM1314 213h1v3h-1zM1315 209h1v5h-1zM1316 208h1v2h-1zM1317 208h1v1h-1zM1318 208h1v1h-1zM1319 208h1v1h-1zM1320 208h1v1h-1zM1321 208h1v1h-1zM1322 208h1v1h-1zM1323 208h1v1h-1zM1324 208h1v5h-1zM1325 212h1v7h-1zM1326 218h1v6h-1zM1327 223h1v4h-1zM1328 226h1v2h-1zM1329 225h1v3h-1zM1330 220h1v6h-1zM1331 213h1v8h-1zM1332 209h1v5h-1zM1333 208h1v2h-1zM1334 208h1v1h-1zM1335 208h1v1h-1zM1336 208h1v1h-1zM1337 208h1v1h-1zM1338 208h1v1h-1zM1339 208h1v1h-1zM1340 208h1v5h-1zM1341 212h1v11h-1zM1342 222h1v12h-1zM1343 233h1v10h-1zM1344 242h1v5h-1zM1345 245h1v3h-1zM1346 238h1v8h-1zM1347 226h1v13h-1zM1348 213h1v14h-1zM1349 208h1v6h-1zM1350 208h1v1h-1zM1351 208h1v1h-1zM1352 208h1v1h-1zM1353 208h1v1h-1zM1354 208h1v1h-1zM1355 208h1v1h-1zM1356 208h1v18h-1zM1357 225h1v43h-1zM1358 267h1v54h-1zM1359 320h1v62h-1zM1360 381h1v67h-1zM1361 447h1v68h-1zM1362 514h1v67h-1zM1363 580h1v62h-1zM1364 641h1v54h-1zM1365 694h1v43h-1zM1366 736h1v18h-1zM1367 753h1v1h-1zM1368 753h1v1h-1zM1369 753h1v1h-1zM1370 753h1v1h-1zM1371 753h1v1h-1zM1372 753h1v1h-1zM1373 748h1v6h-1zM1374 735h1v14h-1zM1375 723h1v13h-1zM1376 716h1v8h-1zM1377 714h1v3h-1zM1378 715h1v5h-1zM1379 719h1v10h-1zM1380 728h1v12h-1zM1381 739h1v11h-1zM1382 749h1v5h-1zM1383 753h1v1h-1zM1384 753h1v1h-1zM1385 753h1v1h-1zM1386 753h1v1h-1zM1387 753h1v1h-1zM1388 753h1v1h-1zM1389 752h1v2h-1zM1390 748h1v5h-1zM1391 741h1v8h-1zM1392 736h1v6h-1zM1393 734h1v3h-1zM1394 734h1v2h-1zM1395 735h1v4h-1zM1396 738h1v6h-1zM1397 743h1v7h-1zM1398 749h1v5h-1zM1399 753h1v1h-1zM1400 753h1v1h-1zM1401 753h1v1h-1zM1402 753h1v1h-1zM1403 753h1v1h-1zM1404 753h1v1h-1zM1405 753h1v1h-1zM1406 752h1v2h-1zM1407 748h1v5h-1zM1408 746h1v3h-1zM1409 744h1v3h-1zM1410 743h1v2h-1zM1411 744h1v2h-1zM1412 745h1v3h-1zM1413 747h1v4h-1zM1414 750h1v3h-1zM1415 752h1v2h-1zM1416 753h1v1h-1zM1417 753h1v1h-1zM1418 753h1v1h-1zM1419 753h1v1h-1zM1420 753h1v1h-1zM1421 753h1v1h-1zM1422 753h1v1h-1zM1423 752h1v2h-1zM1424 750h1v3h-1zM1425 749h1v2h-1zM1426 748h1v2h-1zM1427 748h1v2h-1zM1428 749h1v2h-1zM1429 750h1v2h-1zM1430 751h1v2h-1zM1431 752h1v2h-1zM1432 753h1v1h-1zM1433 753h1v1h-1zM1434 753h1v1h-1zM1435 753h1v1h-1zM1436 753h1v1h-1zM1437 753h1v1h-1zM1438 753h1v1h-1zM1439 752h1v2h-1zM1440 752h1v1h-1zM1441 751h1v2h-1zM1442 751h1v1h-1zM1443 751h1v1h-1zM1444 751h1v2h-1zM1445 752h1v1h-1zM1446 752h1v2h-1zM1447 753h1v1h-1zM1448 753h1v1h-1zM1449 753h1v1h-1zM1450 753h1v1h-1zM1451 753h1v1h-1zM1452 753h1v1h-1zM1453 753h1v1h-1zM1454 753h1v1h-1zM1455 752h1v2h-1zM1456 752h1v1h-1zM1457 752h1v1h-1zM1458 752h1v1h-1zM1459 752h1v2h-1zM1460 753h1v1h-1zM1461 753h1v1h-1zM1462 753h1v1h-1zM1463 753h1v1h-1zM1464 753h1v1h-1zM1465 753h1v1h-1z"/>
<path fill="#7799e0" d="M49 756h1v1h-1zM50 756h1v1h-1zM51 756h1v1h-1zM52 756h1v1h-1zM53 756h1v1h-1zM54 756h1v1h-1zM55 756h1v1h-1zM56 756h1v1h-1zM57 756h1v1h-1zM58 756h1v1h-1zM59 756h1v1h-1zM60 756h1v1h-1zM61 756h1v1h-1zM62 756h1v1h-1zM63 756h1v1h-1zM64 756h1v1h-1zM65 756h1v1h-1zM66 756h1v1h-1zM67 756h1v1h-1zM68 756h1v1h-1zM69 756h1v1h-1zM70 756h1v1h-1zM71 756h1v1h-1zM72 756h1v1h-1zM73 756h1v1h-1zM74 756h1v1h-1zM75 756h1v1h-1zM76 756h1v1h-1zM77 756h1v1h-1zM78 756h1v1h-1zM79 756h1v1h-1zM80 756h1v1h-1zM81 756h1v1h-1zM82 756h1v1h-1zM83 756h1v1h-1zM84 756h1v1h-1zM85 756h1v1h-1zM86 756h1v1h-1zM87 756h1v1h-1zM88 756h1v1h-1zM89 756h1v1h-1zM90 756h1v1h-1zM91 756h1v1h-1zM92 756h1v1h-1zM93 756h1v1h-1zM94 756h1v1h-1zM95 756h1v1h-1zM96 756h1v1h-1zM97 756h1v1h-1zM98 756h1v1h-1zM99 756h1v1h-1zM100 756h1v1h-1zM101 756h1v1h-1zM102 756h1v1h-1zM103 756h1v1h-1zM104 756h1v1h-1zM105 756h1v1h-1zM106 756h1v1h-1zM107 756h1v1h-1zM108 756h1v1h-1zM109 756h1v1h-1zM110 756h1v1h-1zM111 756h1v1h-1zM112 756h1v1h-1zM113 756h1v1h-1zM114 756h1v1h-1zM115 756h1v1h-1zM116 756h1v1h-1zM117 756h1v1h-1zM118 756h1v1h-1zM119 756h1v1h-1zM120 756h1v1h-1zM121 756h1v1h-1zM122 756h1v1h-1zM123 756h1v1h-1zM124 756h1v1h-1zM125 756h1v1h-1zM126 756h1v1h-1zM127 756h1v1h-1zM128 756h1v1h-1zM129 756h1v1h-1zM130 756h1v1h-1zM131 756h1v1h-1zM132 756h1v1h-1zM133 756h1v1h-1zM134 756h1v1h-1zM135 756h1v1h-1zM136 756h1v1h-1zM137 756h1v1h-1zM138 756h1v1h-1zM139 756h1v1h-1zM140 756h1v1h-1zM141 756h1v1h-1zM142 756h1v1h-1zM143 756h1v1h-1zM144 756h1v1h-1zM145 756h1v1h-1zM146 756h1v1h-1zM147 756h1v1h-1zM148 756h1v1h-1zM149 756h1v1h-1zM150 756h1v1h-1zM151 756h1v1h-1zM152 756h1v1h-1zM153 756h1v1h-1zM154 756h1v1h-1zM155 756h1v1h-1zM156 756h1v1h-1zM157 756h1v1h-1zM158 756h1v1h-1zM159 756h1v1h-1zM160 756h1v1h-1zM161 756h1v1h-1zM162 756h1v1h-1zM163 756h1v1h-1zM164 756h1v1h-1zM165 756h1v1h-1zM166 756h1v1h-1zM167 756h1v1h-1zM168 756h1v1h-1zM169 756h1v1h-1zM170 756h1v1h-1zM171 756h1v1h-1zM172 756h1v1h-1zM173 756h1v1h-1zM174 756h1v1h-1zM175 756h1v1h-1zM176 756h1v1h-1zM177 756h1v1h-1zM178 756h1v1h-1zM179 756h1v1h-1zM180 756h1v1h-1zM181 756h1v1h-1zM182 756h1v1h-1zM183 756h1v1h-1zM184 756h1v1h-1zM185 756h1v1h-1zM186 756h1v1h-1zM187 756h1v1h-1zM188 756h1v1h-1zM189 756h1v1h-1zM190 756h1v1h-1zM191 756h1v1h-1zM192 756h1v2h-1zM193 757h1v1h-1zM194 756h1v2h-1zM195 756h1v1h-1zM196 756h1v1h-1zM197 756h1v1h-1zM198 756h1v1h-1zM199 756h1v1h-1zM200 756h1v1h-1zM201 756h1v1h-1zM202 756h1v1h-1zM203 756h1v1h-1zM204 756h1v1h-1zM205 756h1v2h-1zM206 757h1v3h-1zM207 759h1v2h-1zM208 760h1v3h-1zM209 762h1v3h-1zM210 764h1v3h-1zM211 766h1v2h-1zM212 767h1v3h-1zM213 769h1v2h-1zM214 770h1v1h-1zM215 770h1v1h-1zM216 770h1v1h-1zM217 770h1v1h-1zM218 770h1v1h-1zM219 770h1v1h-1zM220 770h1v1h-1zM221 770h1v1h-1zM222 770h1v1h-1zM223 770h1v1h-1zM224 769h1v2h-1zM225 769h1v1h-1zM226 769h1v2h-1zM227 770h1v1h-1zM228 770h1v1h-1zM229 770h1v1h-1zM230 770h1v1h-1zM231 770h1v1h-1zM232 770h1v1h-1zM233 770h1v1h-1zM234 770h1v1h-1zM235 770h1v1h-1zM236 770h1v1h-1zM237 770h1v1h-1zM238 770h1v1h-1zM239 770h1v1h-1zM240 770h1v1h-1zM241 770h1v1h-1zM242 770h1v1h-1zM243 770h1v1h-1zM244 770h1v1h-1zM245 770h1v1h-1zM246 770h1v1h-1zM247 770h1v1h-1zM248 770h1v1h-1zM249 770h1v1h-1zM250 770h1v1h-1zM251 770h1v1h-1zM252 770h1v1h-1zM253 770h1v1h-1zM254 770h1v1h-1zM255 770h1v1h-1zM256 770h1v1h-1zM257 770h1v1h-1zM258 770h1v1h-1zM259 770h1v1h-1zM260 770h1v1h-1zM261 770h1v1h-1zM262 770h1v1h-1zM263 770h1v1h-1zM264 770h1v1h-1zM265 770h1v1h-1zM266 770h1v1h-1zM267 770h1v1h-1zM268 770h1v1h-1zM269 770h1v1h-1zM270 770h1v1h-1zM271 770h1v1h-1zM272 770h1v1h-1zM273 770h1v1h-1zM274 770h1v1h-1zM275 770h1v1h-1zM276 770h1v1h-1zM277 770h1v1h-1zM278 770h1v1h-1zM279 770h1v1h-1zM280 770h1v1h-1zM281 770h1v1h-1zM282 770h1v1h-1zM283 770h1v1h-1zM284 770h1v1h-1zM285 770h1v1h-1zM286 770h1v1h-1zM287 770h1v1h-1zM288 770h1v1h-1zM289 770h1v1h-1zM290 770h1v1h-1zM291 770h1v1h-1zM292 770h1v1h-1zM293 770h1v1h-1zM294 770h1v1h-1zM295 770h1v1h-1zM296 770h1v1h-1zM297 770h1v1h-1zM298 770h1v1h-1zM299 770h1v1h-1zM300 770h1v1h-1zM301 770h1v1h-1zM302 770h1v1h-1zM303 770h1v1h-1zM304 770h1v1h-1zM305 770h1v1h-1zM306 770h1v1h-1zM307 770h1v1h-1zM308 770h1v1h-1zM309 770h1v1h-1zM310 770h1v1h-1zM311 770h1v1h-1zM312 770h1v1h-1zM313 770h1v1h-1zM314 770h1v1h-1zM315 770h1v1h-1zM316 770h1v1h-1zM317 770h1v1h-1zM318 770h1v1h-1zM319 770h1v1h-1zM320 770h1v1h-1zM321 770h1v1h-1zM322 770h1v1h-1zM323 770h1v1h-1zM324 770h1v1h-1zM325 770h1v1h-1zM326 770h1v1h-1zM327 770h1v1h-1zM328 770h1v1h-1zM329 770h1v1h-1zM330 770h1v1h-1zM331 770h1v1h-1zM332 770h1v1h-1zM333 770h1v1h-1zM334 770h1v1h-1zM335 770h1v1h-1zM336 770h1v1h-1zM337 770h1v1h-1zM338 770h1v1h-1zM339 770h1v1h-1zM340 770h1v1h-1zM341 770h1v1h-1zM342 770h1v1h-1zM343 770h1v1h-1zM344 770h1v1h-1zM345 770h1v1h-1zM346 770h1v1h-1zM347 770h1v1h-1zM348 770h1v1h-1zM349 770h1v1h-1zM350 770h1v1h-1zM351 770h1v1h-1zM352 770h1v1h-1zM353 770h1v1h-1zM354 770h1v1h-1zM355 770h1v1h-1zM356 770h1v1h-1zM357 770h1v1h-1zM358 770h1v1h-1zM359 770h1v1h-1zM360 770h1v1h-1zM361 770h1v1h-1zM362 770h1v1h-1zM363 770h1v1h-1zM364 770h1v1h-1zM365 770h1v1h-1zM366 770h1v1h-1zM367 770h1v1h-1zM368 770h1v1h-1zM369 770h1v1h-1zM370 770h1v1h-1zM371 770h1v1h-1zM372 770h1v1h-1zM373 770h1v1h-1zM374 770h1v1h-1zM375 770h1v1h-1zM376 770h1v1h-1zM377 770h1v1h-1zM378 770h1v1h-1zM379 770h1v1h-1zM380 770h1v1h-1zM381 770h1v1h-1zM382 770h1v1h-1zM383 770h1v1h-1zM384 769h1v2h-1zM385 769h1v1h-1zM386 769h1v2h-1zM387 770h1v1h-1zM388 770h1v1h-1zM389 770h1v1h-1zM390 770h1v1h-1zM391 770h1v1h-1zM392 770h1v1h-1zM393 770h1v1h-1zM394 770h1v1h-1zM395 770h1v1h-1zM396 770h1v1h-1zM397 769h1v2h-1zM398 767h1v3h-1zM399 766h1v2h-1zM400 764h1v3h-1zM401 762h1v3h-1zM402 760h1v3h-1zM403 759h1v2h-1zM404 757h1v3h-1zM405 756h1v2h-1zM406 756h1v1h-1zM407 756h1v1h-1zM408 756h1v1h-1zM409 756h1v1h-1zM410 756h1v1h-1zM411 756h1v1h-1zM412 756h1v1h-1zM413 756h1v1h-1zM414 756h1v1h-1zM415 756h1v1h-1zM416 756h1v2h-1zM417 757h1v1h-1zM418 756h1v2h-1zM419 756h1v1h-1zM420 756h1v1h-1zM421 756h1v1h-1zM422 756h1v1h-1zM423 756h1v1h-1zM424 756h1v1h-1zM425 756h1v1h-1zM426 756h1v1h-1zM427 756h1v1h-1zM428 756h1v1h-1zM429 756h1v1h-1zM430 756h1v1h-1zM431 756h1v1h-1zM432 756h1v1h-1zM433 756h1v1h-1zM434 756h1v1h-1zM435 756h1v1h-1zM436 756h1v1h-1zM437 756h1v1h-1zM438 756h1v1h-1zM439 756h1v1h-1zM440 756h1v1h-1zM441 756h1v1h-1zM442 756h1v1h-1zM443 756h1v1h-1zM444 756h1v1h-1zM445 756h1v1h-1zM446 756h1v1h-1zM447 756h1v1h-1zM448 756h1v1h-1zM449 756h1v1h-1zM450 756h1v1h-1zM451 756h1v1h-1zM452 756h1v1h-1zM453 756h1v1h-1zM454 756h1v1h-1zM455 756h1v1h-1zM456 756h1v1h-1zM457 756h1v1h-1zM458 756h1v1h-1zM459 756h1v1h-1zM460 756h1v1h-1zM461 756h1v1h-1zM462 756h1v1h-1zM463 756h1v1h-1zM464 756h1v1h-1zM465 756h1v1h-1zM466 756h1v1h-1zM467 756h1v1h-1zM468 756h1v1h-1zM469 756h1v1h-1zM470 756h1v1h-1zM471 756h1v1h-1zM472 756h1v1h-1zM473 756h1v1h-1zM474 756h1v1h-1zM475 756h1v1h-1zM476 756h1v1h-1zM477 756h1v1h-1zM478 756h1v1h-1zM479 756h1v1h-1zM480 756h1v1h-1zM481 756h1v1h-1zM482 756h1v1h-1zM483 756h1v1h-1zM484 756h1v1h-1zM485 756h1v1h-1zM486 756h1v1h-1zM487 756h1v1h-1zM488 756h1v1h-1zM489 756h1v1h-1zM490 756h1v1h-1zM491 756h1v1h-1zM492 756h1v1h-1zM493 756h1v1h-1zM494 756h1v1h-1zM495 756h1v1h-1zM496 756h1v1h-1zM497 756h1v1h-1zM498 756h1v1h-1zM499 756h1v1h-1zM500 756h1v1h-1zM501 756h1v1h-1zM502 756h1v1h-1zM503 756h1v1h-1zM504 756h1v1h-1zM505 756h1v1h-1zM506 756h1v1h-1zM507 756h1v1h-1zM508 756h1v1h-1zM509 756h1v1h-1zM510 756h1v1h-1zM511 756h1v1h-1zM512 756h1v1h-1zM513 756h1v1h-1zM514 756h1v1h-1zM515 756h1v1h-1zM516 756h1v1h-1zM517 756h1v1h-1zM518 756h1v1h-1zM519 756h1v1h-1zM520 756h1v1h-1zM521 756h1v1h-1zM522 756h1v1h-1zM523 756h1v1h-1zM524 756h1v1h-1zM525 756h1v1h-1zM526 756h1v1h-1zM527 756h1v1h-1zM528 756h1v1h-1zM529 756h1v1h-1zM530 756h1v1h-1zM531 756h1v1h-1zM532 756h1v1h-1zM533 756h1v1h-1zM534 756h1v1h-1zM535 756h1v1h-1zM536 756h1v1h-1zM537 756h1v1h-1zM538 756h1v1h-1zM539 756h1v1h-1zM540 756h1v1h-1zM541 756h1v1h-1zM542 756h1v1h-1zM543 756h1v1h-1zM544 756h1v1h-1zM545 756h1v1h-1zM546 756h1v1h-1zM547 756h1v1h-1zM548 756h1v1h-1zM549 756h1v1h-1zM550 756h1v1h-1zM551 756h1v1h-1zM552 756h1v1h-1zM553 756h1v1h-1zM554 756h1v1h-1zM555 756h1v1h-1zM556 756h1v1h-1zM557 756h1v1h-1zM558 756h1v1h-1zM559 756h1v1h-1zM560 756h1v1h-1zM561 756h1v1h-1zM562 756h1v1h-1zM563 756h1v1h-1zM564 756h1v1h-1zM565 756h1v1h-1zM566 756h1v1h-1zM567 756h1v1h-1zM568 756h1v1h-1zM569 756h1v1h-1zM570 756h1v1h-1zM571 756h1v1h-1zM572 756h1v1h-1zM573 756h1v1h-1zM574 756h1v1h-1zM575 756h1v1h-1zM576 756h1v2h-1zM577 757h1v1h-1zM578 756h1v2h-1zM579 756h1v1h-1zM580 756h1v1h-1zM581 756h1v1h-1zM582 756h1v1h-1zM583 756h1v1h-1zM584 756h1v1h-1zM585 756h1v1h-1zM586 756h1v1h-1zM587 756h1v1h-1zM588 756h1v1h-1zM589 756h1v2h-1zM590 757h1v3h-1zM591 759h1v2h-1zM592 760h1v3h-1zM593 762h1v3h-1zM594 764h1v3h-1zM595 766h1v2h-1zM596 767h1v3h-1zM597 769h1v2h-1zM598 770h1v1h-1zM599 770h1v1h-1zM600 770h1v1h-1zM601 770h1v1h-1zM602 770h1v1h-1zM603 770h1v1h-1zM604 770h1v1h-1zM605 770h1v1h-1zM606 770h1v1h-1zM607 770h1v1h-1zM608 769h1v2h-1zM609 769h1v1h-1zM610 769h1v2h-1zM611 770h1v1h-1zM612 770h1v1h-1zM613 770h1v1h-1zM614 770h1v1h-1zM615 770h1v1h-1zM616 770h1v1h-1zM617 770h1v1h-1zM618 770h1v1h-1zM619 770h1v1h-1zM620 770h1v1h-1zM621 770h1v1h-1zM622 770h1v1h-1zM623 770h1v1h-1zM624 770h1v1h-1zM625 770h1v1h-1zM626 770h1v1h-1zM627 770h1v1h-1zM628 770h1v1h-1zM629 770h1v1h-1zM630 770h1v1h-1zM631 770h1v1h-1zM632 770h1v1h-1zM633 770h1v1h-1zM634 770h1v1h-1zM635 770h1v1h-1zM636 770h1v1h-1zM637 770h1v1h-1zM638 770h1v1h-1zM639 770h1v1h-1zM640 770h1v1h-1zM641 770h1v1h-1zM642 770h1v1h-1zM643 770h1v1h-1zM644 770h1v1h-1zM645 770h1v1h-1zM646 770h1v1h-1zM647 770h1v1h-1zM648 770h1v1h-1zM649 770h1v1h-1zM650 770h1v1h-1zM651 770h1v1h-1zM652 770h1v1h-1zM653 770h1v1h-1zM654 770h1v1h-1zM655 770h1v1h-1zM656 770h1v1h-1zM657 770h1v1h-1zM658 770h1v1h-1zM659 770h1v1h-1zM660 770h1v1h-1zM661 770h1v1h-1zM662 770h1v1h-1zM663 770h1v1h-1zM664 770h1v1h-1zM665 770h1v1h-1zM666 770h1v1h-1zM667 770h1v1h-1zM668 770h1v1h-1zM669 770h1v1h-1zM670 770h1v1h-1zM671 770h1v1h-1zM672 770h1v1h-1zM673 770h1v1h-1zM674 770h1v1h-1zM675 770h1v1h-1zM676 770h1v1h-1zM677 770h1v1h-1zM678 770h1v1h-1zM679 770h1v1h-1zM680 770h1v1h-1zM681 770h1v1h-1zM682 770h1v1h-1zM683 770h1v1h-1zM684 770h1v1h-1zM685 770h1v1h-1zM686 770h1v1h-1zM687 770h1v1h-1zM688 770h1v1h-1zM689 770h1v1h-1zM690 770h1v1h-1zM691 770h1v1h-1zM692 770h1v1h-1zM693 770h1v1h-1zM694 770h1v1h-1zM695 770h1v1h-1zM696 770h1v1h-1zM697 770h1v1h-1zM698 770h1v1h-1zM699 770h1v1h-1zM700 770h1v1h-1zM701 770h1v1h-1zM702 770h1v1h-1zM703 770h1v1h-1zM704 770h1v1h-1zM705 770h1v1h-1zM706 770h1v1h-1zM707 770h1v1h-1zM708 770h1v1h-1zM709 770h1v1h-1zM710 770h1v1h-1zM711 770h1v1h-1zM712 770h1v1h-1zM713 770h1v1h-1zM714 770h1v1h-1zM715 770h1v1h-1zM716 770h1v1h-1zM717 770h1v1h-1zM718 770h1v1h-1zM719 770h1v1h-1zM720 770h1v1h-1zM721 770h1v1h-1zM722 770h1v1h-1zM723 770h1v1h-1zM724 770h1v1h-1zM725 770h1v1h-1zM726 770h1v1h-1zM727 770h1v1h-1zM728 770h1v1h-1zM729 770h1v1h-1zM730 770h1v1h-1zM731 770h1v1h-1zM732 770h1v1h-1zM733 770h1v1h-1zM734 770h1v1h-1zM735 770h1v1h-1zM736 770h1v1h-1zM737 770h1v1h-1zM738 770h1v1h-1zM739 770h1v1h-1zM740 770h1v1h-1zM741 770h1v1h-1zM742 770h1v1h-1zM743 770h1v1h-1zM744 770h1v1h-1zM745 770h1v1h-1zM746 770h1v1h-1zM747 770h1v1h-1zM748 770h1v1h-1zM749 770h1v1h-1zM750 770h1v1h-1zM751 770h1v1h-1zM752 770h1v1h-1zM753 770h1v1h-1zM754 770h1v1h-1zM755 770h1v1h-1zM756 770h1v1h-1zM757 770h1v1h-1zM758 770h1v1h-1zM759 770h1v1h-1zM760 770h1v1h-1zM761 770h1v1h-1zM762 770h1v1h-1zM763 770h1v1h-1zM764 770h1v1h-1zM765 770h1v1h-1zM766 770h1v1h-1zM767 770h1v1h-1zM768 769h1v2h-1zM769 769h1v1h-1zM770 769h1v2h-1zM771 770h1v1h-1zM772 770h1v1h-1zM773 770h1v1h-1zM774 770h1v1h-1zM775 770h1v1h-1zM776 770h1v1h-1zM777 770h1v1h-1zM778 770h1v1h-1zM779 770h1v1h-1zM780 770h1v1h-1zM781 769h1v2h-1zM782 767h1v3h-1zM783 766h1v2h-1zM784 764h1v3h-1zM785 762h1v3h-1zM786 760h1v3h-1zM787 759h1v2h-1zM788 757h1v3h-1zM789 756h1v2h-1zM790 756h1v1h-1zM791 756h1v1h-1zM792 756h1v1h-1zM793 756h1v1h-1zM794 756h1v1h-1zM795 756h1v1h-1zM796 756h1v1h-1zM797 756h1v1h-1zM798 756h1v1h-1zM799 756h1v1h-1zM800 756h1v2h-1zM801 757h1v1h-1zM802 756h1v2h-1zM803 756h1v1h-1zM804 756h1v1h-1zM805 756h1v1h-1zM806 756h1v1h-1zM807 756h1v1h-1zM808 756h1v1h-1zM809 756h1v1h-1zM810 756h1v1h-1zM811 756h1v1h-1zM812 756h1v1h-1zM813 756h1v1h-1zM814 756h1v1h-1zM815 756h1v1h-1zM816 756h1v1h-1zM817 756h1v1h-1zM818 756h1v1h-1zM819 756h1v1h-1zM820 756h1v1h-1zM821 756h1v1h-1zM822 756h1v1h-1zM823 756h1v1h-1zM824 756h1v1h-1zM825 756h1v1h-1zM826 756h1v1h-1zM827 756h1v1h-1zM828 756h1v1h-1zM829 756h1v1h-1zM830 756h1v1h-1zM831 756h1v1h-1zM832 756h1v1h-1zM833 756h1v1h-1zM834 756h1v1h-1zM835 756h1v1h-1zM836 756h1v1h-1zM837 756h1v1h-1zM838 756h1v1h-1zM839 756h1v1h-1zM840 756h1v1h-1zM841 756h1v1h-1zM842 756h1v1h-1zM843 756h1v1h-1zM844 756h1v1h-1zM845 756h1v1h-1zM846 756h1v1h-1zM847 756h1v1h-1zM848 756h1v1h-1zM849 756h1v1h-1zM850 756h1v1h-1zM851 756h1v1h-1zM852 756h1v1h-1zM853 756h1v1h-1zM854 756h1v1h-1zM855 756h1v1h-1zM856 756h1v1h-1zM857 756h1v1h-1zM858 756h1v1h-1zM859 756h1v1h-1zM860 756h1v1h-1zM861 756h1v1h-1zM862 756h1v1h-1zM863 756h1v1h-1zM864 756h1v1h-1zM865 756h1v1h-1zM866 756h1v1h-1zM867 756h1v1h-1zM868 756h1v1h-1zM869 756h1v1h-1zM870 756h1v1h-1zM871 756h1v1h-1zM872 756h1v1h-1zM873 756h1v1h-1zM874 756h1v1h-1zM875 756h1v1h-1zM876 756h1v1h-1zM877 756h1v1h-1zM878 756h1v1h-1zM879 756h1v1h-1zM880 756h1v1h-1zM881 756h1v1h-1zM882 756h1v1h-1zM883 756h1v1h-1zM884 756h1v1h-1zM885 756h1v1h-1zM886 756h1v1h-1zM887 756h1v1h-1zM888 756h1v1h-1zM889 756h1v1h-1zM890 756h1v1h-1zM891 756h1v1h-1zM892 756h1v1h-1zM893 756h1v1h-1zM894 756h1v1h-1zM895 756h1v1h-1zM896 756h1v1h-1zM897 756h1v1h-1zM898 756h1v1h-1zM899 756h1v1h-1zM900 756h1v1h-1zM901 756h1v1h-1zM902 756h1v1h-1zM903 756h1v1h-1zM904 756h1v1h-1zM905 756h1v1h-1zM906 756h1v1h-1zM907 756h1v1h-1zM908 756h1v1h-1zM909 756h1v1h-1zM910 756h1v1h-1zM911 756h1v1h-1zM912 756h1v1h-1zM913 756h1v1h-1zM914 756h1v1h-1zM915 756h1v1h-1zM916 756h1v1h-1zM917 756h1v1h-1zM918 756h1v1h-1zM919 756h1v1h-1zM920 756h1v1h-1zM921 756h1v1h-1zM922 756h1v1h-1zM923 756h1v1h-1zM924 756h1v1h-1zM925 756h1v1h-1zM926 756h1v1h-1zM927 756h1v1h-1zM928 756h1v1h-1zM929 756h1v1h-1zM930 756h1v1h-1zM931 756h1v1h-1zM932 756h1v1h-1zM933 756h1v1h-1zM934 756h1v1h-1zM935 756h1v1h-1zM936 756h1v1h-1zM937 756h1v1h-1zM938 756h1v1h-1zM939 756h1v1h-1zM940 756h1v1h-1zM941 756h1v1h-1zM942 756h1v1h-1zM943 756h1v1h-1zM944 756h1v1h-1zM945 756h1v1h-1zM946 756h1v1h-1zM947 756h1v1h-1zM948 756h1v1h-1zM949 756h1v1h-1zM950 756h1v1h-1zM951 756h1v1h-1zM952 756h1v1h-1zM953 756h1v1h-1zM954 756h1v1h-1zM955 756h1v1h-1zM956 756h1v1h-1zM957 756h1v1h-1zM958 756h1v1h-1zM959 756h1v1h-1zM960 756h1v2h-1zM961 757h1v1h-1zM962 756h1v2h-1zM963 756h1v1h-1zM964 756h1v1h-1zM965 756h1v1h-1zM966 756h1v1h-1zM967 756h1v1h-1zM968 756h1v1h-1zM969 756h1v1h-1zM970 756h1v1h-1zM971 756h1v1h-1zM972 756h1v1h-1zM973 756h1v2h-1zM974 757h1v3h-1zM975 759h1v2h-1zM976 760h1v3h-1zM977 762h1v3h-1zM978 764h1v3h-1zM979 766h1v2h-1zM980 767h1v3h-1zM981 769h1v2h-1zM982 770h1v1h-1zM983 770h1v1h-1zM984 770h1v1h-1zM985 770h1v1h-1zM986 770h1v1h-1zM987 770h1v1h-1zM988 770h1v1h-1zM989 770h1v1h-1zM990 770h1v1h-1zM991 770h1v1h-1zM992 769h1v2h-1zM993 769h1v1h-1zM994 769h1v2h-1zM995 770h1v1h-1zM996 770h1v1h-1zM997 770h1v1h-1zM998 770h1v1h-1zM999 770h1v1h-1zM1000 770h1v1h-1zM1001 770h1v1h-1zM1002 770h1v1h-1zM1003 770h1v1h-1zM1004 770h1v1h-1zM1005 770h1v1h-1zM1006 770h1v1h-1zM1007 770h1v1h-1zM1008 770h1v1h-1zM1009 770h1v1h-1zM1010 770h1v1h-1zM1011 770h1v1h-1zM1012 770h1v1h-1zM1013 770h1v1h-1zM1014 770h1v1h-1zM1015 770h1v1h-1zM1016 770h1v1h-1zM1017 770h1v1h-1zM1018 770h1v1h-1zM1019 770h1v1h-1zM1020 770h1v1h-1zM1021 770h1v1h-1zM1022 770h1v1h-1zM1023 770h1v1h-1zM1024 770h1v1h-1zM1025 770h1v1h-1zM1026 770h1v1h-1zM1027 770h1v1h-1zM1028 770h1v1h-1zM1029 770h1v1h-1zM1030 770h1v1h-1zM1031 770h1v1h-1zM1032 770h1v1h-1zM1033 770h1v1h-1zM1034 770h1v1h-1zM1035 770h1v1h-1zM1036 770h1v1h-1zM1037 770h1v1h-1zM1038 770h1v1h-1zM1039 770h1v1h-1zM1040 770h1v1h-1zM1041 770h1v1h-1zM1042 770h1v1h-1zM1043 770h1v1h-1zM1044 770h1v1h-1zM1045 770h1v1h-1zM1046 770h1v1h-1zM1047 770h1v1h-1zM1048 770h1v1h-1zM1049 770h1v1h-1zM1050 770h1v1h-1zM1051 770h1v1h-1zM1052 770h1v1h-1zM1053 770h1v1h-1zM1054 770h1v1h-1zM1055 770h1v1h-1zM1056 770h1v1h-1zM1057 770h1v1h-1zM1058 770h1v1h-1zM1059 770h1v1h-1zM1060 770h1v1h-1zM1061 770h1v1h-1zM1062 770h1v1h-1zM1063 770h1v1h-1zM1064 770h1v1h-1zM1065 770h1v1h-1zM1066 770h1v1h-1zM1067 770h1v1h-1zM1068 770h1v1h-1zM1069 770h1v1h-1zM1070 770h1v1h-1zM1071 770h1v1h-1zM1072 770h1v1h-1zM1073 770h1v1h-1zM1074 770h1v1h-1zM1075 770h1v1h-1zM1076 770h1v1h-1zM1077 770h1v1h-1zM1078 770h1v1h-1zM1079 770h1v1h-1zM1080 770h1v1h-1zM1081 770h1v1h-1zM1082 770h1v1h-1zM1083 770h1v1h-1zM1084 770h1v1h-1zM1085 770h1v1h-1zM1086 770h1v1h-1zM1087 770h1v1h-1zM1088 770h1v1h-1zM1089 770h1v1h-1zM1090 770h1v1h-1zM1091 770h1v1h-1zM1092 770h1v1h-1zM1093 770h1v1h-1zM1094 770h1v1h-1zM1095 770h1v1h-1zM1096 770h1v1h-1zM1097 770h1v1h-1zM1098 770h1v1h-1zM1099 770h1v1h-1zM1100 770h1v1h-1zM1101 770h1v1h-1zM1102 770h1v1h-1zM1103 770h1v1h-1zM1104 770h1v1h-1zM1105 770h1v1h-1zM1106 770h1v1h-1zM1107 770h1v1h-1zM1108 770h1v1h-1zM1109 770h1v1h-1zM1110 770h1v1h-1zM1111 770h1v1h-1zM1112 770h1v1h-1zM1113 770h1v1h-1zM1114 770h1v1h-1zM1115 770h1v1h-1zM1116 770h1v1h-1zM1117 770h1v1h-1zM1118 770h1v1h-1zM1119 770h1v1h-1zM1120 770h1v1h-1zM1121 770h1v1h-1zM1122 770h1v1h-1zM1123 770h1v1h-1zM1124 770h1v1h-1zM1125 770h1v1h-1zM1126 770h1v1h-1zM1127 770h1v1h-1zM1128 770h1v1h-1zM1129 770h1v1h-1zM1130 770h1v1h-1zM1131 770h1v1h-1zM1132 770h1v1h-1zM1133 770h1v1h-1zM1134 770h1v1h-1zM1135 770h1v1h-1zM1136 770h1v1h-1zM1137 770h1v1h-1zM1138 770h1v1h-1zM1139 770h1v1h-1zM1140 770h1v1h-1zM1141 770h1v1h-1zM1142 770h1v1h-1zM1143 770h1v1h-1zM1144 770h1v1h-1zM1145 770h1v1h-1zM1146 770h1v1h-1zM1147 770h1v1h-1zM1148 770h1v1h-1zM1149 770h1v1h-1zM1150 770h1v1h-1zM1151 770h1v1h-1zM1152 769h1v2h-1zM1153 769h1v1h-1zM1154 769h1v2h-1zM1155 770h1v1h-1zM1156 770h1v1h-1zM1157 770h1v1h-1zM1158 770h1v1h-1zM1159 770h1v1h-1zM1160 770h1v1h-1zM1161 770h1v1h-1zM1162 770h1v1h-1zM1163 770h1v1h-1zM1164 770h1v1h-1zM1165 769h1v2h-1zM1166 767h1v3h-1zM1167 766h1v2h-1zM1168 764h1v3h-1zM1169 762h1v3h-1zM1170 760h1v3h-1zM1171 759h1v2h-1zM1172 757h1v3h-1zM1173 756h1v2h-1zM1174 756h1v1h-1zM1175 756h1v1h-1zM1176 756h1v1h-1zM1177 756h1v1h-1zM1178 756h1v1h-1zM1179 756h1v1h-1zM1180 756h1v1h-1zM1181 756h1v1h-1zM1182 756h1v1h-1zM1183 756h1v1h-1zM1184 756h1v2h-1zM1185 757h1v1h-1zM1186 756h1v2h-1zM1187 756h1v1h-1zM1188 756h1v1h-1zM1189 756h1v1h-1zM1190 756h1v1h-1zM1191 756h1v1h-1zM1192 756h1v1h-1zM1193 756h1v1h-1zM1194 756h1v1h-1zM1195 756h1v1h-1zM1196 756h1v1h-1zM1197 756h1v1h-1zM1198 756h1v1h-1zM1199 756h1v1h-1zM1200 756h1v1h-1zM1201 756h1v1h-1zM1202 756h1v1h-1zM1203 756h1v1h-1zM1204 756h1v1h-1zM1205 756h1v1h-1zM1206 756h1v1h-1zM1207 756h1v1h-1zM1208 756h1v1h-1zM1209 756h1v1h-1zM1210 756h1v1h-1zM1211 756h1v1h-1zM1212 756h1v1h-1zM1213 756h1v1h-1zM1214 756h1v1h-1zM1215 756h1v1h-1zM1216 756h1v1h-1zM1217 756h1v1h-1zM1218 756h1v1h-1zM1219 756h1v1h-1zM1220 756h1v1h-1zM1221 756h1v1h-1zM1222 756h1v1h-1zM1223 756h1v1h-1zM1224 756h1v1h-1zM1225 756h1v1h-1zM1226 756h1v1h-1zM1227 756h1v1h-1zM1228 756h1v1h-1zM1229 756h1v1h-1zM1230 756h1v1h-1zM1231 756h1v1h-1zM1232 756h1v1h-1zM1233 756h1v1h-1zM1234 756h1v1h-1zM1235 756h1v1h-1zM1236 756h1v1h-1zM1237 756h1v1h-1zM1238 756h1v1h-1zM1239 756h1v1h-1zM1240 756h1v1h-1zM1241 756h1v1h-1zM1242 756h1v1h-1zM1243 756h1v1h-1zM1244 756h1v1h-1zM1245 756h1v1h-1zM1246 756h1v1h-1zM1247 756h1v1h-1zM1248 756h1v1h-1zM1249 756h1v1h-1zM1250 756h1v1h-1zM1251 756h1v1h-1zM1252 756h1v1h-1zM1253 756h1v1h-1zM1254 756h1v1h-1zM1255 756h1v1h-1zM1256 756h1v1h-1zM1257 756h1v1h-1zM1258 756h1v1h-1zM1259 756h1v1h-1zM1260 756h1v1h-1zM1261 756h1v1h-1zM1262 756h1v1h-1zM1263 756h1v1h-1zM1264 756h1v1h-1zM1265 756h1v1h-1zM1266 756h1v1h-1zM1267 756h1v1h-1zM1268 756h1v1h-1zM1269 756h1v1h-1zM1270 756h1v1h-1zM1271 756h1v1h-1zM1272 756h1v1h-1zM1273 756h1v1h-1zM1274 756h1v1h-1zM1275 756h1v1h-1zM1276 756h1v1h-1zM1277 756h1v1h-1zM1278 756h1v1h-1zM1279 756h1v1h-1zM1280 756h1v1h-1zM1281 756h1v1h-1zM1282 756h1v1h-1zM1283 756h1v1h-1zM1284 756h1v1h-1zM1285 756h1v1h-1zM1286 756h1v1h-1zM1287 756h1v1h-1zM1288 756h1v1h-1zM1289 756h1v1h-1zM1290 756h1v1h-1zM1291 756h1v1h-1zM1292 756h1v1h-1zM1293 756h1v1h-1zM1294 756h1v1h-1zM1295 756h1v1h-1zM1296 756h1v1h-1zM1297 756h1v1h-1zM1298 756h1v1h-1zM1299 756h1v1h-1zM1300 756h1v1h-1zM1301 756h1v1h-1zM1302 756h1v1h-1zM1303 756h1v1h-1zM1304 756h1v1h-1zM1305 756h1v1h-1zM1306 756h1v1h-1zM1307 756h1v1h-1zM1308 756h1v1h-1zM1309 756h1v1h-1zM1310 756h1v1h-1zM1311 756h1v1h-1zM1312 756h1v1h-1zM1313 756h1v1h-1zM1314 756h1v1h-1zM1315 756h1v1h-1zM1316 756h1v1h-1zM1317 756h1v1h-1zM1318 756h1v1h-1zM1319 756h1v1h-1zM1320 756h1v1h-1zM1321 756h1v1h-1zM1322 756h1v1h-1zM1323 756h1v1h-1zM1324 756h1v1h-1zM1325 756h1v1h-1zM1326 756h1v1h-1zM1327 756h1v1h-1zM1328 756h1v1h-1zM1329 756h1v1h-1zM1330 756h1v1h-1zM1331 756h1v1h-1zM1332 756h1v1h-1zM1333 756h1v1h-1zM1334 756h1v1h-1zM1335 756h1v1h-1zM1336 756h1v1h-1zM1337 756h1v1h-1zM1338 756h1v1h-1zM1339 756h1v1h-1zM1340 756h1v1h-1zM1341 756h1v1h-1zM1342 756h1v1h-1zM1343 756h1v1h-1zM1344 756h1v2h-1zM1345 757h1v1h-1zM1346 756h1v2h-1zM1347 756h1v1h-1zM1348 756h1v1h-1zM1349 756h1v1h-1zM1350 756h1v1h-1zM1351 756h1v1h-1zM1352 756h1v1h-1zM1353 756h1v1h-1zM1354 756h1v1h-1zM1355 756h1v1h-1zM1356 756h1v1h-1zM1357 756h1v2h-1zM1358 757h1v3h-1zM1359 759h1v2h-1zM1360 760h1v3h-1zM1361 762h1v3h-1zM1362 764h1v3h-1zM1363 766h1v2h-1zM1364 767h1v3h-1zM1365 769h1v2h-1zM1366 770h1v1h-1zM1367 770h1v1h-1zM1368 770h1v1h-1zM1369 770h1v1h-1zM1370 770h1v1h-1zM1371 770h1v1h-1zM1372 770h1v1h-1zM1373 770h1v1h-1zM1374 770h1v1h-1zM1375 770h1v1h-1zM1376 769h1v2h-1zM1377 769h1v1h-1zM1378 769h1v2h-1zM1379 770h1v1h-1zM1380 770h1v1h-1zM1381 770h1v1h-1zM1382 770h1v1h-1zM1383 770h1v1h-1zM1384 770h1v1h-1zM1385 770h1v1h-1zM1386 770h1v1h-1zM1387 770h1v1h-1zM1388 770h1v1h-1zM1389 770h1v1h-1zM1390 770h1v1h-1zM1391 770h1v1h-1zM1392 770h1v1h-1zM1393 770h1v1h-1zM1394 770h1v1h-1zM1395 770h1v1h-1zM1396 770h1v1h-1zM1397 770h1v1h-1zM1398 770h1v1h-1zM1399 770h1v1h-1zM1400 770h1v1h-1zM1401 770h1v1h-1zM1402 770h1v1h-1zM1403 770h1v1h-1zM1404 770h1v1h-1zM1405 770h1v1h-1zM1406 770h1v1h-1zM1407 770h1v1h-1zM1408 770h1v1h-1zM1409 770h1v1h-1zM1410 770h1v1h-1zM1411 770h1v1h-1zM1412 770h1v1h-1zM1413 770h1v1h-1zM1414 770h1v1h-1zM1415 770h1v1h-1zM1416 770h1v1h-1zM1417 770h1v1h-1zM1418 770h1v1h-1zM1419 770h1v1h-1zM1420 770h1v1h-1zM1421 770h1v1h-1zM1422 770h1v1h-1zM1423 770h1v1h-1zM1424 770h1v1h-1zM1425 770h1v1h-1zM1426 770h1v1h-1zM1427 770h1v1h-1zM1428 770h1v1h-1zM1429 770h1v1h-1zM1430 770h1v1h-1zM1431 770h1v1h-1zM1432 770h1v1h-1zM1433 770h1v1h-1zM1434 770h1v1h-1zM1435 770h1v1h-1zM1436 770h1v1h-1zM1437 770h1v1h-1zM1438 770h1v1h-1zM1439 770h1v1h-1zM1440 770h1v1h-1zM1441 770h1v1h-1zM1442 770h1v1h-1zM1443 770h1v1h-1zM1444 770h1v1h-1zM1445 770h1v1h-1zM1446 770h1v1h-1zM1447 770h1v1h-1zM1448 770h1v1h-1zM1449 770h1v1h-1zM1450 770h1v1h-1zM1451 770h1v1h-1zM1452 770h1v1h-1zM1453 770h1v1h-1zM1454 770h1v1h-1zM1455 770h1v1h-1zM1456 770h1v1h-1zM1457 770h1v1h-1zM1458 770h1v1h-1zM1459 770h1v1h-1zM1460 770h1v1h-1zM1461 770h1v1h-1zM1462 770h1v1h-1zM1463 770h1v1h-1zM1464 770h1v1h-1zM1465 770h1v1h-1z"/>
</svg>
<div class="a" style="left:1333px;top:208px;width:1px;height:563px;background:#c8c8c8"></div>

<!-- scroll row -->
<div class="a" style="left:0;top:772px;width:1466px;height:15px;background:#363636"></div>
<div class="a" style="left:0;top:772px;width:33px;height:15px;background:#474747"></div>
<div class="a" style="left:33px;top:772px;width:1px;height:15px;background:#2c2c2c"></div>
<div class="a" style="left:34px;top:772px;width:16px;height:15px;background:#474747"></div>
<div class="a" style="left:81px;top:772px;width:13px;height:15px;background:#474747"></div>
<div class="a" style="left:85px;top:774px;width:1px;height:11px;background:#2a2a2a"></div>
<div class="a" style="left:87px;top:774px;width:1px;height:11px;background:#2a2a2a"></div>
<div class="a" style="left:89px;top:774px;width:1px;height:11px;background:#2a2a2a"></div>
<div class="a" style="left:1393px;top:772px;width:73px;height:15px;background:#474747"></div>
<div class="a" style="left:1409px;top:772px;width:1px;height:15px;background:#363636"></div>
<div class="a" style="left:0;top:787px;width:1466px;height:1px;background:#2c2c2c"></div>
<svg class="a" style="left:0;top:772px" width="1466" height="15">
<path d="M5 8h6M8 5v6" stroke="#eee" stroke-width="2"/>
<path d="M22 8h6" stroke="#eee" stroke-width="2"/>
<path d="M44.5 4v7.5l-4.5-3.75z" fill="#e6e6e6"/>
<path d="M1400 4v7.5l4.5-3.75z" fill="#e6e6e6"/>
<path d="M1415 8h6M1418 5v6" stroke="#eee" stroke-width="2"/>
<path d="M1437 8h6" stroke="#eee" stroke-width="2"/>
<path d="M1455.5 4.5v7l-4.5-3.5zM1458 4.5v7l4.5-3.5z" fill="#e6e6e6"/>
</svg>

<!-- bottom transport -->
<svg class="a" style="left:0;top:788px" width="200" height="27">
<circle cx="15" cy="13" r="6.2" fill="#222" stroke="#e6e6e6" stroke-width="1.3"/><circle cx="15" cy="13" r="4.9" fill="#e80000"/><circle cx="19.2" cy="17.2" r="3.8" fill="#f0f0f0" stroke="#2a2a2a" stroke-width="0.9"/><path d="M18.3 15.6v3.2M20.1 15.6v3.2" stroke="#2a2a2a" stroke-width="0.9"/>
<circle cx="39" cy="13" r="6.2" fill="#222" stroke="#e6e6e6" stroke-width="1.3"/><circle cx="39" cy="13" r="4.9" fill="#e80000"/>
<rect x="57.5" y="7.5" width="2" height="11" fill="#ececec"/><path d="M68.5 7.5v11l-8.5-5.5z" fill="#ececec"/>
<path d="M81.5 7.5v11l8.5-5.5z" fill="#ececec"/><rect x="90.5" y="7.5" width="2" height="11" fill="#ececec"/>
<rect x="104.5" y="7" width="12" height="12" fill="#ececec"/>
<path d="M129.5 7v12l11-6z" fill="#ececec"/>
<path d="M152.5 6v14M154.5 5.5v14.5M156 6v8" stroke="#f5c400" stroke-width="1.2"/><path d="M153.5 6v13M155.3 7v8" stroke="#e87810" stroke-width="0.8"/>
<path d="M158.5 14.5l5-7.5 2.8 1.8-5 7.5z" fill="#48b4ee" stroke="#1a1a1a" stroke-width="0.6"/><path d="M162.5 10.5l-2 3" stroke="#1a1a1a" stroke-width="1"/>
<path d="M158.5 14.5l2.8 1.8-1.2 1.8-2.8-1.8z" fill="#f0f0f0"/><path d="M157 17.5l1.8 1.2-1 1.2-1.2-0.4z" fill="#f5d000"/>
<path d="M181 13l5.2-4.8a6.8 6.8 0 1 0 0 9.6z" fill="#ececec" stroke="#222" stroke-width="0.6"/><circle cx="180.8" cy="9" r="0.9" fill="#111"/>
<path d="M185.5 11.3a2 2 0 0 1 0 3.4M187.2 10a4 4 0 0 1 0 6M188.8 9a5.5 5.5 0 0 1 0 8" fill="none" stroke="#e8c000" stroke-width="0.9"/>
</svg>
<div class="t" style="left:206px;top:792px;font-size:11.3px;color:#dcdcdc">Частота: 0,00</div>
<div class="a" style="left:306px;top:794px;width:121px;height:3px;background:#e6e6e6"></div>
<div class="a" style="left:306px;top:795px;width:50px;height:1px;background:#9a9a9a"></div>
<div class="a" style="left:356px;top:789px;width:19px;height:13px;background:#f2f2f2;border:1px solid #bdbdbd"></div>
<div class="a" style="left:362px;top:792px;width:1px;height:7px;background:#222"></div>
<div class="a" style="left:365px;top:792px;width:1px;height:7px;background:#222"></div>
<div class="a" style="left:368px;top:792px;width:1px;height:7px;background:#222"></div>
<svg class="a" style="left:371px;top:802px" width="10" height="7"><path d="M5 0.5L9.5 6.5h-9z" fill="#f0f0f0" stroke="#333" stroke-width="0.6"/></svg>
<div class="fld" style="left:1164px;width:72px;padding-left:2px">00:00:00,089</div>
<div class="fld" style="left:1239px;width:72px"></div>
<div class="fld" style="left:1314px;width:72px;padding-left:2px">00:00:00,014</div>
<div class="fld" style="left:1391px;width:72px;text-align:right;padding-right:3px">2:1</div>

<!-- tab -->
<div class="a" style="left:0;top:815px;width:1466px;height:22px;background:#242424"></div>
<div class="a" style="left:0;top:815px;width:98px;height:17px;background:linear-gradient(#4a4a4a,#565656)"></div>
<div class="t" style="left:9px;top:818px;font-size:11.6px;font-weight:bold;color:#ececec">Sound 2</div>
<div class="t" style="left:57px;top:818px;font-size:11px;color:#ececec">*</div>
<svg class="a" style="left:69px;top:818px" width="12" height="12"><path d="M1.5 5.5h6v5h-6z M3.5 5.5v-3h6.5v5h-2.5" fill="none" stroke="#eee" stroke-width="1.2"/></svg>
<svg class="a" style="left:84px;top:819px" width="11" height="11"><path d="M1.5 1.5L8.5 8.5M8.5 1.5L1.5 8.5" stroke="#eee" stroke-width="1.8"/></svg>


<!-- ============ RIGHT PANEL ============ -->
<div class="a" style="left:1466px;top:103px;width:8px;height:734px;background:#242424"></div>
<div class="a" style="left:1474px;top:103px;width:126px;height:734px;background:#4a4a4a"></div>

<div class="a" style="left:1486px;top:113px;width:20px;height:17px;border-radius:1.5px;background:linear-gradient(#a9b5ce,#8a9ac0 50%,#6a7eae);box-shadow:inset 0 0 0 1px #6478a8"></div>
<div class="t" style="left:1497px;top:117px;font-size:10.5px;color:#fff">1</div>
<div class="a" style="left:1516px;top:113px;width:20px;height:17px;border-radius:1.5px;background:linear-gradient(#a9b5ce,#8a9ac0 50%,#6a7eae);box-shadow:inset 0 0 0 1px #6478a8"></div>
<div class="t" style="left:1527px;top:117px;font-size:10.5px;color:#fff">2</div>
<div class="a" style="left:1474px;top:815px;width:126px;height:17px;background:#505050"></div>
<div class="t" style="left:1483px;top:819px;font-size:11.8px;font-weight:bold;color:#e6e6e6;width:117px;overflow:hidden">Индикатор каналов</div>
<div class="a" style="left:1582px;top:815px;width:18px;height:17px;background:linear-gradient(90deg,rgba(80,80,80,0),rgba(70,70,70,.75) 55%,#2e2e2e)"></div>
<div class="a" style="left:1466px;top:832px;width:134px;height:5px;background:#242424"></div>
<div class="a" style="left:1484px;top:134px;width:110px;height:671px;background:#000"></div>
<svg class="a" style="left:1484px;top:134px" width="110" height="671" viewBox="1484 134 110 671">
<defs><linearGradient id="gl" x1="0" x2="1"><stop offset="0" stop-color="#cfcfcf"/><stop offset="1" stop-color="#cfcfcf" stop-opacity="0"/></linearGradient>
<linearGradient id="gr" x1="1" x2="0"><stop offset="0" stop-color="#cfcfcf"/><stop offset="1" stop-color="#cfcfcf" stop-opacity="0"/></linearGradient></defs>
<rect x="1494" y="176" width="1" height="116" fill="#ff0000"/><rect x="1584" y="176" width="1" height="116" fill="#ff0000"/>
<rect x="1494" y="292" width="1" height="115" fill="#f0a020"/><rect x="1584" y="292" width="1" height="115" fill="#f0a020"/>
<rect x="1494" y="407" width="1" height="381" fill="#3a9a10"/><rect x="1584" y="407" width="1" height="381" fill="#3a9a10"/>
<rect x="1495" y="176" width="38" height="1" fill="url(#gl)"/><rect x="1546" y="176" width="38" height="1" fill="url(#gr)"/>
<rect x="1495" y="292" width="38" height="1" fill="url(#gl)"/><rect x="1546" y="292" width="38" height="1" fill="url(#gr)"/>
<rect x="1495" y="419" width="38" height="1" fill="url(#gl)"/><rect x="1546" y="419" width="38" height="1" fill="url(#gr)"/>
<rect x="1495" y="540" width="38" height="1" fill="url(#gl)"/><rect x="1546" y="540" width="38" height="1" fill="url(#gr)"/>
<rect x="1495" y="645" width="38" height="1" fill="url(#gl)"/><rect x="1546" y="645" width="38" height="1" fill="url(#gr)"/>
<rect x="1495" y="722" width="38" height="1" fill="url(#gl)"/><rect x="1546" y="722" width="38" height="1" fill="url(#gr)"/>
<rect x="1495" y="764" width="38" height="1" fill="url(#gl)"/><rect x="1546" y="764" width="38" height="1" fill="url(#gr)"/>
<rect x="1495" y="781" width="38" height="1" fill="url(#gl)"/><rect x="1546" y="781" width="38" height="1" fill="url(#gr)"/>
<rect x="1495" y="228" width="20" height="1" fill="url(#gl)"/><rect x="1564" y="228" width="20" height="1" fill="url(#gr)"/>
<rect x="1495" y="356" width="20" height="1" fill="url(#gl)"/><rect x="1564" y="356" width="20" height="1" fill="url(#gr)"/>
<rect x="1495" y="480" width="20" height="1" fill="url(#gl)"/><rect x="1564" y="480" width="20" height="1" fill="url(#gr)"/>
<rect x="1495" y="595" width="20" height="1" fill="url(#gl)"/><rect x="1564" y="595" width="20" height="1" fill="url(#gr)"/>
<rect x="1495" y="688" width="20" height="1" fill="url(#gl)"/><rect x="1564" y="688" width="20" height="1" fill="url(#gr)"/>
<rect x="1495" y="787" width="20" height="1" fill="url(#gl)"/><rect x="1564" y="787" width="20" height="1" fill="url(#gr)"/>
<rect x="1495" y="189" width="9" height="1" fill="url(#gl)"/><rect x="1575" y="189" width="9" height="1" fill="url(#gr)"/>
<rect x="1495" y="202" width="9" height="1" fill="url(#gl)"/><rect x="1575" y="202" width="9" height="1" fill="url(#gr)"/>
<rect x="1495" y="215" width="9" height="1" fill="url(#gl)"/><rect x="1575" y="215" width="9" height="1" fill="url(#gr)"/>
<rect x="1495" y="241" width="9" height="1" fill="url(#gl)"/><rect x="1575" y="241" width="9" height="1" fill="url(#gr)"/>
<rect x="1495" y="254" width="9" height="1" fill="url(#gl)"/><rect x="1575" y="254" width="9" height="1" fill="url(#gr)"/>
<rect x="1495" y="267" width="9" height="1" fill="url(#gl)"/><rect x="1575" y="267" width="9" height="1" fill="url(#gr)"/>
<rect x="1495" y="279" width="9" height="1" fill="url(#gl)"/><rect x="1575" y="279" width="9" height="1" fill="url(#gr)"/>
<rect x="1495" y="305" width="9" height="1" fill="url(#gl)"/><rect x="1575" y="305" width="9" height="1" fill="url(#gr)"/>
<rect x="1495" y="317" width="9" height="1" fill="url(#gl)"/><rect x="1575" y="317" width="9" height="1" fill="url(#gr)"/>
<rect x="1495" y="330" width="9" height="1" fill="url(#gl)"/><rect x="1575" y="330" width="9" height="1" fill="url(#gr)"/>
<rect x="1495" y="343" width="9" height="1" fill="url(#gl)"/><rect x="1575" y="343" width="9" height="1" fill="url(#gr)"/>
<rect x="1495" y="368" width="9" height="1" fill="url(#gl)"/><rect x="1575" y="368" width="9" height="1" fill="url(#gr)"/>
<rect x="1495" y="381" width="9" height="1" fill="url(#gl)"/><rect x="1575" y="381" width="9" height="1" fill="url(#gr)"/>
<rect x="1495" y="394" width="9" height="1" fill="url(#gl)"/><rect x="1575" y="394" width="9" height="1" fill="url(#gr)"/>
<rect x="1495" y="406" width="9" height="1" fill="url(#gl)"/><rect x="1575" y="406" width="9" height="1" fill="url(#gr)"/>
<rect x="1495" y="431" width="9" height="1" fill="url(#gl)"/><rect x="1575" y="431" width="9" height="1" fill="url(#gr)"/>
<rect x="1495" y="443" width="9" height="1" fill="url(#gl)"/><rect x="1575" y="443" width="9" height="1" fill="url(#gr)"/>
<rect x="1495" y="456" width="9" height="1" fill="url(#gl)"/><rect x="1575" y="456" width="9" height="1" fill="url(#gr)"/>
<rect x="1495" y="468" width="9" height="1" fill="url(#gl)"/><rect x="1575" y="468" width="9" height="1" fill="url(#gr)"/>
<rect x="1495" y="492" width="9" height="1" fill="url(#gl)"/><rect x="1575" y="492" width="9" height="1" fill="url(#gr)"/>
<rect x="1495" y="504" width="9" height="1" fill="url(#gl)"/><rect x="1575" y="504" width="9" height="1" fill="url(#gr)"/>
<rect x="1495" y="516" width="9" height="1" fill="url(#gl)"/><rect x="1575" y="516" width="9" height="1" fill="url(#gr)"/>
<rect x="1495" y="528" width="9" height="1" fill="url(#gl)"/><rect x="1575" y="528" width="9" height="1" fill="url(#gr)"/>
</svg>
<div class="mt" style="left:1524px;top:171px;color:#dcdcdc">9</div>
<div class="mt" style="left:1524px;top:287px;color:#dcdcdc">0</div>
<div class="mt" style="left:1524px;top:414px;color:#dcdcdc">-10</div>
<div class="mt" style="left:1524px;top:535px;color:#dcdcdc">-20</div>
<div class="mt" style="left:1524px;top:640px;color:#dcdcdc">-30</div>
<div class="mt" style="left:1524px;top:717px;color:#dcdcdc">-40</div>
<div class="mt" style="left:1524px;top:759px;color:#dcdcdc">-50</div>
<div class="mt" style="left:1524px;top:223px;color:#9c9c9c">5</div>
<div class="mt" style="left:1524px;top:351px;color:#9c9c9c">-5</div>
<div class="mt" style="left:1524px;top:475px;color:#9c9c9c">-15</div>
<div class="mt" style="left:1524px;top:590px;color:#9c9c9c">-25</div>
<div class="mt" style="left:1524px;top:683px;color:#9c9c9c">-35</div>
<div class="mt" style="left:1524px;top:782px;color:#9c9c9c">-70</div>
<div class="t" style="left:1509px;top:792px;font-size:10px;color:#e0e0e0">L</div>
<div class="t" style="left:1563px;top:792px;font-size:10px;color:#e0e0e0">R</div>
<div class="a" style="left:1490px;top:193px;width:104px;height:18px;background:#fff;border:1px solid #a0a0a0;box-shadow:1px 1px 1px rgba(0,0,0,.4)"></div>
<div class="t" style="left:1496px;top:197px;font-size:11.2px;color:#505050">Датчики пиков V2</div>

<!-- ============ STATUS BAR ============ -->
<div class="a" style="left:0;top:837px;width:1600px;height:23px;background:#393939"></div>
<div class="st" style="left:1262px;width:65px;padding-right:5px;letter-spacing:-0.3px">192 000 Hz</div>
<div class="st" style="left:1329px;width:47px;padding-right:6px">24 бит</div>
<div class="st" style="left:1378px;width:53px;padding-right:8px">Стерео</div>
<div class="st" style="left:1433px;width:79px;padding-right:5px">00:00:00,000</div>
<div class="st" style="left:1518px;width:79px;padding-right:4px">59 136,6 Мб</div>
</body></html>
